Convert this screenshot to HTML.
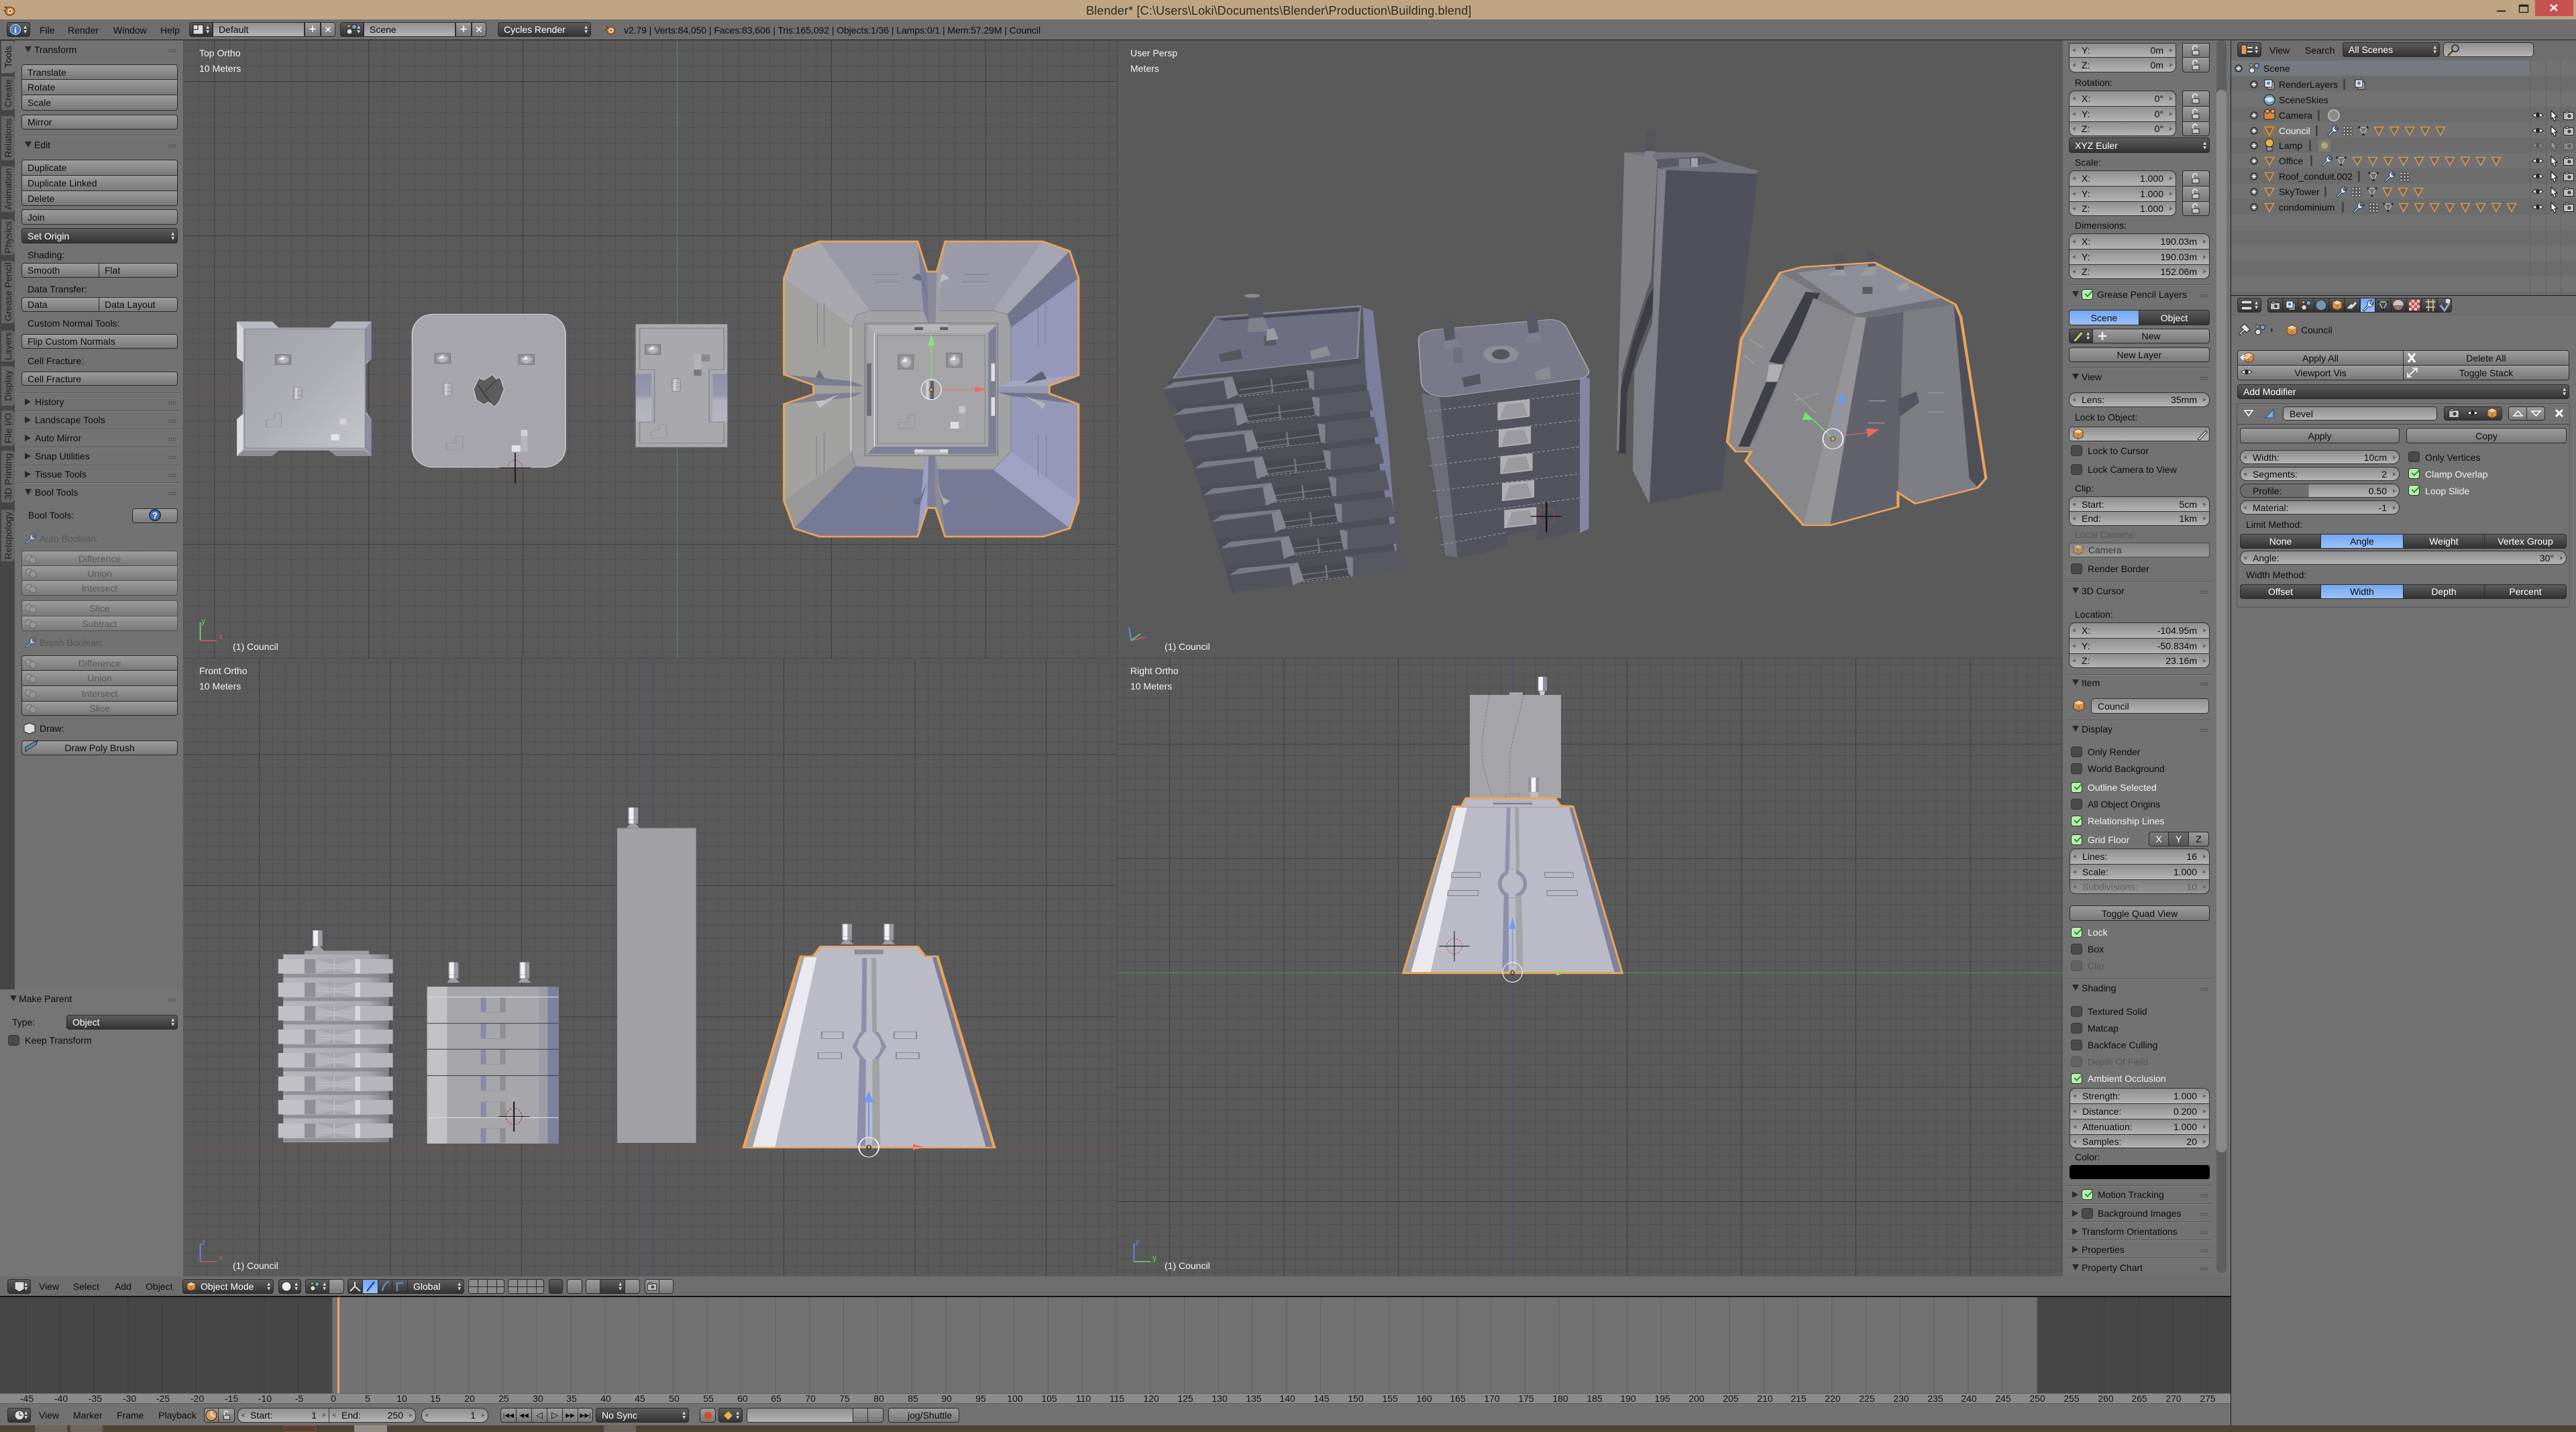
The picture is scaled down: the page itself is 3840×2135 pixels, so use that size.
<!DOCTYPE html>
<html><head><meta charset="utf-8"><title>Blender</title>
<style>
html,body{margin:0;padding:0;width:3840px;height:2135px;overflow:hidden;background:#727272}
body{position:relative;font:14px/16px "Liberation Sans",sans-serif;color:#0c0c0c}
.a{position:absolute;white-space:nowrap}
.p{position:absolute}
.b,.n,.m,.act,.f{position:absolute;box-sizing:border-box;display:flex;align-items:center;white-space:nowrap;border:1px solid #2c2c2c;border-radius:4px;overflow:hidden}
.b{background:linear-gradient(#9c9c9c,#797979);justify-content:center}
.l{justify-content:flex-start;padding-left:8px}
.n{background:linear-gradient(#8e8e8e,#b4b4b4);justify-content:space-between;padding:0 18px;border-color:#333}
.f{background:linear-gradient(#8e8e8e,#b4b4b4);padding-left:12px;border-color:#333}
.n:before,.n:after{content:"";position:absolute;top:50%;margin-top:-3px;border:3px solid transparent}
.n:before{left:4px;border-right:5px solid #686868;border-left:0}
.n:after{right:4px;border-left:5px solid #686868;border-right:0}
.m{background:linear-gradient(#5c5c5c,#333);color:#fff;padding-left:8px}
.m:after{content:"\25B2\A\25BC";white-space:pre;position:absolute;right:4px;top:50%;margin-top:-7px;font:6px/7px "DejaVu Sans",sans-serif;color:#ddd}
.mc{justify-content:center;padding-left:0}
.mc:after{display:none}
.act{background:linear-gradient(#74a6ef,#9ac2fb);justify-content:center}
.rt{border-radius:9px 9px 0 0}.rb{border-radius:0 0 9px 9px}.r0{border-radius:0}.ra{border-radius:10px}
.d{opacity:.5}
.w{color:#f2f2f2}
.g{color:#555}
.v{position:absolute;left:2px;width:20px;box-sizing:border-box;background:#656565;border-radius:5px 0 0 5px;writing-mode:vertical-rl;transform:rotate(180deg);text-align:center;line-height:20px;font-size:14px;color:#222}
.td{position:absolute;width:0;height:0;border-left:5px solid transparent;border-right:5px solid transparent;border-top:9px solid #2a2a2a}
.tr{position:absolute;width:0;height:0;border-top:5px solid transparent;border-bottom:5px solid transparent;border-left:9px solid #2a2a2a}
.gd{position:absolute;width:11px;height:5px;background-image:radial-gradient(#4c4c4c 1px,transparent 1px);background-size:3px 3px}
.c{position:absolute;width:17px;height:16px;box-sizing:border-box;border:1px solid #333;border-radius:4px;background:#4a4a4a}
.on{background:#b4f0a8}
.on:after{content:"";position:absolute;left:4px;top:2px;width:9px;height:4px;border-left:2px solid #2c8a42;border-bottom:2px solid #2c8a42;transform:rotate(-45deg)}
.s{position:absolute;height:1px;background:#5a5a5a;border-bottom:1px solid #808080}
</style></head>
<body>

<!-- ============ VIEWPORTS ============ -->
<svg class="p" style="left:0;top:0" width="3840" height="2135" viewBox="0 0 3840 2135" font-family="Liberation Sans">
<defs>
<pattern id="gm1" patternUnits="userSpaceOnUse" x="1009" y="581" width="23" height="23"><path d="M.5 0V23M0 .5H23" stroke="#505050" fill="none"/></pattern>
<pattern id="gM1" patternUnits="userSpaceOnUse" x="1009" y="581" width="230" height="230"><path d="M.5 0V230M0 .5H230" stroke="#3d3d3d" fill="none"/></pattern>
<pattern id="gm2" patternUnits="userSpaceOnUse" x="972.5" y="1711" width="19.55" height="19.55"><path d="M.5 0V19.55M0 .5H19.55" stroke="#505050" fill="none"/></pattern>
<pattern id="gM2" patternUnits="userSpaceOnUse" x="972.5" y="1711" width="195.5" height="195.5"><path d="M.5 0V195.5M0 .5H195.5" stroke="#3d3d3d" fill="none"/></pattern>
<pattern id="gm3" patternUnits="userSpaceOnUse" x="2254.5" y="1450" width="17.05" height="17.05"><path d="M.5 0V17.05M0 .5H17.05" stroke="#505050" fill="none"/></pattern>
<pattern id="gM3" patternUnits="userSpaceOnUse" x="2254.5" y="1450" width="170.5" height="170.5"><path d="M.5 0V170.5M0 .5H170.5" stroke="#3d3d3d" fill="none"/></pattern>
<pattern id="tl" patternUnits="userSpaceOnUse" x="495" y="0" width="50.8" height="50"><path d="M.5 0V50" stroke="#000" stroke-opacity=".16" fill="none"/></pattern>
<linearGradient id="gr1" x1="0" y1="0" x2="1" y2="1"><stop offset="0" stop-color="#a2a3a9"/><stop offset=".5" stop-color="#adaeb3"/><stop offset="1" stop-color="#c4c5cc"/></linearGradient>
<linearGradient id="gr3" x1="0" y1="0" x2="0" y2="1"><stop offset="0" stop-color="#8d90a8"/><stop offset=".45" stop-color="#9698ad"/><stop offset=".55" stop-color="#b0b1bb"/><stop offset="1" stop-color="#b4b5c2"/></linearGradient>
<linearGradient id="gr5" x1="0" y1="0" x2="1" y2="0"><stop offset="0" stop-color="#b6b6bb"/><stop offset=".8" stop-color="#a8a8ae"/><stop offset="1" stop-color="#7e7f88"/></linearGradient>
<symbol id="dome" viewBox="0 0 24 24"><path d="M1 1H23V23H1Z" fill="#8f8f93" stroke="#777"/><ellipse cx="12" cy="12" rx="8" ry="9" fill="#a9a9ad"/><path d="M12 4L19 12L12 20L5 12Z" fill="#b9b9bd"/><path d="M12 5L6 12H14Z" fill="#eee"/></symbol>
<symbol id="pipeT" viewBox="0 0 13 28"><rect x=".5" y=".5" width="12" height="27" rx="3" fill="#b4b4b8" stroke="#85858a"/><path d="M0 9H13M0 18H13" stroke="#8a8a8f"/><rect x="3" y="1" width="3" height="26" fill="#d2d2d6"/></symbol>
<g id="bf">
<polygon points="57,680 270,680 270,778 57,778" fill="url(#gr5)"/>
<rect x="122" y="698" width="82" height="62" fill="#a5a5aa"/>
<polygon points="122,700 162,722 202,700 202,760 162,742 122,760" fill="#b2b2b7"/>
<path d="M125 725H198M125 738H198M160 700V760" stroke="#c8c8cc" stroke-width="1.5" fill="none"/>
<rect x="47" y="700" width="63" height="60" fill="#c0c0c5"/><rect x="100" y="700" width="22" height="60" fill="#8e8e94"/>
<rect x="210" y="700" width="68" height="60" fill="#b5b5ba"/><rect x="202" y="700" width="10" height="60" fill="#d8d8dc"/>
<rect x="57" y="762" width="213" height="14" fill="#808086" opacity=".7"/>
</g>
<g id="pl"><polygon points="42,848 60,826 165,808 150,822" fill="#7a7a88"/><polygon points="42,848 150,822 156,880 52,902" fill="#53535d"/><polygon points="150,822 165,808 176,865 156,880" fill="#84848f"/></g>
<g id="pr"><polygon points="298,788 400,768 408,830 312,852" fill="#585863"/><polygon points="298,788 312,792 312,852 304,845" fill="#80808c"/></g>
<g id="pm"><polygon points="168,826 300,800 308,846 176,876" fill="#494951"/><path d="M178 850L300 822M175 868L240 852M235 815L238 860" stroke="#77777f" stroke-width="3" fill="none"/><path d="M178 872L305 846" stroke="#9a9aa2" stroke-width="2" stroke-dasharray="5 3"/></g>
<g id="win"><polygon points="642,890 700,880 700,935 642,947" fill="#b0b0b4"/><polygon points="656,896 688,890 696,932 646,942" fill="#9a9a9f"/></g>
<g id="pipeF"><rect x="0" y="0" width="20" height="67" fill="#9a9aa6"/><rect x="2" y="0" width="9" height="67" fill="#f0f0f2"/><path d="M0 52H20" stroke="#777"/><path d="M4 68L-3 85H23L15 68Z" fill="#9f9fa5"/></g>
</defs>

<!-- top-left -->
<rect x="273" y="60" width="1392" height="921" fill="#5a5a5a"/>
<rect x="273" y="60" width="1392" height="921" fill="url(#gm1)"/>
<rect x="273" y="60" width="1392" height="921" fill="url(#gM1)"/>
<path d="M273 581.5H1665" stroke="#7d4a4a"/><path d="M1009.5 60V981" stroke="#5f8a5f"/>
<!-- top-right -->
<rect x="1665" y="60" width="1410" height="921" fill="#5a5a5a"/>
<!-- bottom-left -->
<rect x="273" y="981" width="1392" height="922" fill="#5a5a5a"/>
<rect x="273" y="981" width="1392" height="922" fill="url(#gm2)"/>
<rect x="273" y="981" width="1392" height="922" fill="url(#gM2)"/>
<path d="M273 1711.5H1665" stroke="#7d4a4a"/><path d="M972.5 981V1903" stroke="#4f5f85"/>
<!-- bottom-right -->
<rect x="1665" y="981" width="1410" height="922" fill="#5a5a5a"/>
<rect x="1665" y="981" width="1410" height="922" fill="url(#gm3)"/>
<rect x="1665" y="981" width="1410" height="922" fill="url(#gM3)"/>
<path d="M1665 1450.5H3075" stroke="#5f8a5f"/><path d="M2254.5 981V1903" stroke="#4f5f85"/>
<path d="M1665.5 60V1903M273 981.5H3075" stroke="#484848"/>

<!-- TOP VIEW small buildings -->
<g transform="translate(320 440) scale(.5102 .33333)">
<polygon points="65,118 168,118 187,145 335,145 355,118 458,118 458,285 442,310 442,520 458,555 458,720 355,720 335,695 187,695 168,720 65,720 65,555 82,530 82,300 65,280" fill="#a8a8b0"/>
<polygon points="65,118 85,150 85,300 65,280" fill="#d8d8dc"/><polygon points="65,555 85,530 85,685 65,720" fill="#dcdce0"/>
<polygon points="65,118 168,118 187,148 85,150" fill="#b8b8c4"/><polygon points="355,118 458,118 440,150 335,148" fill="#b4b4c0"/>
<polygon points="458,118 440,150 440,300 458,285" fill="#8c8ea2"/><polygon points="458,555 440,530 440,685 458,720" fill="#8c8ea2"/>
<polygon points="65,720 85,695 187,695 168,720" fill="#8e8e92"/><polygon points="355,720 335,695 440,695 458,720" fill="#8e8e92"/>
<rect x="86" y="152" width="354" height="532" fill="url(#gr1)" stroke="#88888e" stroke-width="3"/>
<use href="#dome" x="175" y="250" width="50" height="76"/>
<use href="#pipeT" x="229" y="396" width="27" height="86"/>
<path d="M150 590V560L175 550V530L195 530V590Z" fill="none" stroke="#8e8e94" stroke-width="2"/>
<polygon points="365,550 385,550 385,650 340,650 340,622 365,622" fill="#bbbbc0"/><rect x="340" y="622" width="24" height="28" fill="#e4e4e8"/><rect x="365" y="552" width="20" height="28" fill="#d0d0d6"/>

<rect x="577" y="85" width="448" height="685" rx="60" ry="90" fill="#a5a5ab" stroke="#cfcfd4" stroke-width="3"/>
<use href="#dome" x="641" y="245" width="50" height="76"/><use href="#dome" x="886" y="250" width="50" height="76"/>
<use href="#pipeT" x="667" y="380" width="27" height="84"/>
<path d="M772 370L787 380L812 355L822 375L834 367L846 420L832 475L818 500L800 478L786 490L764 468L756 420Z" fill="#5c5c5c" stroke="#c4c4c8" stroke-width="3"/>
<path d="M768 400L805 478M822 382L790 430" stroke="#111" stroke-width="1.5" fill="none"/>
<path d="M677 690V665L705 660V632L725 632V690Z" fill="none" stroke="#8e8e94" stroke-width="2"/>
<polygon points="895,602 914,602 914,700 868,700 868,672 895,672" fill="#b5b5ba"/><rect x="868" y="672" width="25" height="28" fill="#e4e4e8"/><rect x="895" y="603" width="19" height="28" fill="#d0d0d6"/>
<ellipse cx="878" cy="775" rx="22" ry="36" fill="none" stroke="#b03a3a" stroke-width="2" stroke-dasharray="6 4"/><path d="M878 705V842M833 772H923" stroke="#0a0a0a" stroke-width="3"/>

<rect x="1230" y="130" width="268" height="550" fill="#a9a9ad"/>
<path d="M1242 148V333H1285V568H1242V662H1488V568H1445V333H1488V148Z" fill="none" stroke="#85858a" stroke-width="3"/>
<rect x="1231" y="353" width="45" height="212" fill="url(#gr3)"/><rect x="1455" y="353" width="43" height="212" fill="url(#gr3)"/>
<use href="#dome" x="1255" y="205" width="50" height="76"/><use href="#pipeT" x="1335" y="358" width="27" height="88"/>
<polygon points="1400,265 1425,265 1425,298 1447,298 1447,265 1422,265 1422,358 1400,358" fill="#b4b4b8"/><rect x="1422" y="265" width="25" height="32" fill="#88888d"/><rect x="1400" y="333" width="22" height="27" fill="#77777c"/>
<path d="M1275 640V610L1300 600V578L1320 578V640Z" fill="none" stroke="#8e8e94" stroke-width="2"/>
</g>

<!-- TOP VIEW Council -->
<g transform="translate(1100 320) scale(.35714 .33333)">
<polygon points="340,120 750,120 790,255 830,255 865,120 1272,120 1385,163 1422,285 1422,718 1300,765 1300,800 1422,848 1422,1285 1385,1403 1275,1440 865,1440 825,1312 790,1312 750,1440 340,1440 235,1403 192,1280 192,848 315,803 315,762 192,715 192,285 235,160" fill="#9e9ea4"/>
<polygon points="340,120 750,120 790,430 550,430" fill="#9a9aa6"/>
<polygon points="235,160 340,120 550,430 480,500 192,285" fill="#a8a8ae"/>
<polygon points="192,285 475,500 475,745 192,715" fill="#a1a19f"/>
<polygon points="192,848 475,818 475,1065 192,1280" fill="#a2a2a0"/>
<polygon points="192,1280 475,1065 490,1125 235,1403" fill="#989898"/>
<polygon points="235,1403 490,1125 775,1140 750,1440 340,1440" fill="#757a96"/>
<polygon points="865,120 1272,120 1065,430 840,430" fill="#9a9aa8"/>
<polygon points="1272,120 1385,163 1125,445 1065,430" fill="#a4a4b2"/>
<polygon points="1385,163 1422,285 1140,505 1125,445" fill="#73758e"/>
<polygon points="1422,285 1140,505 1140,745 1422,718" fill="#9698ba"/>
<polygon points="1422,848 1140,812 1140,1060 1422,1285" fill="#9698ba"/>
<polygon points="1422,1285 1385,1403 1065,1140 1140,1060" fill="#9fa2c2"/>
<polygon points="1385,1403 1275,1440 865,1440 830,1140 1065,1140" fill="#767a97"/>
<polygon points="790,255 830,255 825,490 795,490" fill="#8a8a98"/><polygon points="750,120 790,255 795,490 775,430" fill="#7a7d9c"/><polygon points="865,120 830,255 825,490 840,430" fill="#a0a0a2"/>
<polygon points="315,762 315,803 535,795 535,768" fill="#a0a09e"/><polygon points="192,715 315,762 535,768 475,745" fill="#7a7c90"/><polygon points="192,848 315,803 535,795 475,818" fill="#808092"/>
<polygon points="1300,765 1300,800 1080,795 1080,770" fill="#9698b0"/><polygon points="1422,718 1300,765 1080,770 1140,745" fill="#a4a6c2"/><polygon points="1422,848 1300,800 1080,795 1140,812" fill="#72748e"/>
<polygon points="790,1312 825,1312 822,1075 795,1075" fill="#7b7f9c"/><polygon points="750,1440 790,1312 795,1075 775,1140" fill="#9ca0c8"/><polygon points="865,1440 825,1312 822,1075 835,1140" fill="#8a8a90"/>
<polygon points="550,430 775,430 795,490 530,485 480,505 495,450" fill="#a2a2a4"/><polygon points="840,430 1065,430 1125,445 1140,505 1085,485 822,490" fill="#a2a2a4"/>
<polygon points="475,505 530,485 530,770 475,745" fill="#a2a2a2"/><polygon points="475,818 530,790 530,1078 475,1065" fill="#a2a2a2"/>
<polygon points="1140,505 1085,485 1085,765 1140,745" fill="#a2a2a4"/><polygon points="1140,812 1085,795 1085,1078 1140,1060" fill="#a2a2a4"/>
<polygon points="490,1125 530,1078 780,1078 775,1140" fill="#a2a2a2"/><polygon points="835,1140 835,1078 1085,1078 1140,1060 1065,1140" fill="#a2a2a4"/>
<path d="M475 505L495 450L550 430H775M840 430H1065L1125 445L1140 505V745M1140 812V1060L1065 1140H830M775 1140H550L490 1125L475 1065" fill="none" stroke="#7d7d82" stroke-width="2.5"/>
<rect x="530" y="485" width="555" height="593" fill="#9d9da1" stroke="#76767a" stroke-width="3"/>
<polygon points="540,495 1078,495 1045,528 570,528" fill="#b0b0b3"/><polygon points="1078,495 1078,1070 1045,1038 1045,528" fill="#7d7f96"/><polygon points="540,1070 1078,1070 1045,1038 570,1038" fill="#7d7f96"/><polygon points="540,495 570,528 570,1038 540,1070" fill="#a6a6a9"/>
<rect x="570" y="528" width="475" height="510" fill="#a5a5a8"/><rect x="583" y="541" width="449" height="482" fill="#a5a5a8" stroke="#7d7d82" stroke-width="2.5"/>
<rect x="737" y="490" width="140" height="26" fill="#b6b6ba"/><rect x="737" y="503" width="36" height="13" fill="#5d5d68"/><rect x="843" y="503" width="34" height="13" fill="#5d5d68"/>
<rect x="737" y="1050" width="140" height="22" fill="#babac0"/><rect x="737" y="1050" width="36" height="13" fill="#dcdce0"/><rect x="843" y="1050" width="34" height="13" fill="#dcdce0"/>
<rect x="538" y="665" width="19" height="235" fill="#6e6e78"/><rect x="1057" y="665" width="16" height="235" fill="#dcdce0"/><rect x="1057" y="745" width="16" height="72" fill="#7e7e86"/>
<path d="M471 505V1055M570 528V1038" stroke="#fff" stroke-width="2.5"/>
<use href="#dome" x="666" y="622" width="70" height="74"/><use href="#dome" x="868" y="614" width="70" height="74"/>
<path d="M672 928H710V896H738V957H672Z" fill="none" stroke="#8e8e94" stroke-width="2"/>
<polygon points="922,857 950,857 950,957 887,957 887,927 922,927" fill="#a9a9ad"/><rect x="887" y="927" width="35" height="30" fill="#dedee2"/><rect x="922" y="857" width="28" height="30" fill="#c4c4cc"/>
<path d="M563 268H672M572 300H680M940 268H1050M935 300H1040M575 1264H678M560 1295H672M935 1264H1042M943 1295H1055M332 395V578M360 395V590M1253 415V585M1285 395V575M328 990V1170M360 975V1145M1253 980V1175M1287 990V1170" stroke="#7f7f86" stroke-width="3" fill="none"/>
<polygon points="725,285 745,265 760,265 790,365 775,300" fill="#6a6c80"/><polygon points="885,285 860,265 850,270 825,370 845,300" fill="#bcbcc0"/>
<polygon points="325,728 340,695 360,730 420,745" fill="#6c6e84"/><polygon points="325,835 360,830 420,805 340,865" fill="#c0c0c4"/>
<polygon points="1290,735 1270,700 1255,710 1195,755" fill="#60627a"/><polygon points="1285,845 1270,870 1255,850 1195,810" fill="#b4b4ba"/>
<polygon points="760,1265 735,1270 735,1295 760,1295 790,1200" fill="#6a6c80"/><polygon points="855,1265 885,1280 860,1300 830,1200" fill="#b0b0b2"/>
<rect x="785" y="745" width="42" height="80" fill="#a2a2a6"/><rect x="803" y="745" width="15" height="80" fill="#5e5e64"/><rect x="785" y="745" width="12" height="80" fill="#d0d0d2"/>
<path d="M807 735V560" stroke="#7ee87a" stroke-width="3"/><polygon points="807,532 795,585 821,585" fill="#7ee87a"/>
<path d="M850 783H1000" stroke="#ec6a5e" stroke-width="3"/><polygon points="1038,782 990,770 990,795" fill="#ec6a5e"/>
<ellipse cx="807" cy="782" rx="42" ry="45" fill="none" stroke="#fff" stroke-width="3"/><ellipse cx="807" cy="782" rx="8" ry="8" stroke="#111" stroke-width="2" style="fill:#e69a50"/>
<polygon points="340,120 750,120 790,255 830,255 865,120 1272,120 1385,163 1422,285 1422,718 1300,765 1300,800 1422,848 1422,1285 1385,1403 1275,1440 865,1440 825,1312 790,1312 750,1440 340,1440 235,1403 192,1280 192,848 315,803 315,762 192,715 192,285 235,160" fill="none" stroke="#eba35a" stroke-width="8.5"/>
</g>

<!-- PERSPECTIVE -->
<g transform="translate(1700 180) scale(.8292 .4719)">
<!-- B1 -->
<polygon points="400,590 418,600 445,1000 462,1385 445,1400 430,1200 405,800" fill="#7c7e9e"/>
<polygon points="48,820 395,750 460,1385 165,1492 150,1400" fill="#4f4f59"/>
<polygon points="135,620 395,585 392,750 60,812" fill="#6e6e82"/><path d="M135 620L395 585L390 750L60 812Z" fill="none" stroke="#8b8ba0" stroke-width="3"/><polygon points="138,625 395,590 393,602 150,632" fill="#4a4a56"/>
<polygon points="187,555 215,550 222,620 195,625" fill="#585862"/><ellipse cx="201" cy="553" rx="14" ry="6" fill="#8a8a96"/><polygon points="195,625 222,620 232,665 192,668" fill="#80808c"/>
<rect x="222" y="680" width="22" height="30" fill="#5a5a62"/><polygon points="228,660 240,655 248,690 226,695" fill="#9a9aa2"/>
<polygon points="140,738 180,722 184,752 145,762" fill="#56565f"/><polygon points="305,728 335,712 342,740 308,755" fill="#8d8d95"/>
<use href="#pm"/><use href="#pl"/><use href="#pr"/>
<g transform="translate(14 84)"><use href="#pm"/></g><g transform="translate(18 84)"><use href="#pl"/></g><g transform="translate(10 84)"><use href="#pr"/></g>
<g transform="translate(28 168)"><use href="#pm"/></g><g transform="translate(36 168)"><use href="#pl"/></g><g transform="translate(20 168)"><use href="#pr"/></g>
<g transform="translate(42 252)"><use href="#pm"/></g><g transform="translate(54 252)"><use href="#pl"/></g><g transform="translate(30 252)"><use href="#pr"/></g>
<g transform="translate(56 336)"><use href="#pm"/></g><g transform="translate(70 336)"><use href="#pl"/></g><g transform="translate(40 336)"><use href="#pr"/></g>
<g transform="translate(70 420)"><use href="#pm"/></g><g transform="translate(86 420)"><use href="#pl"/></g><g transform="translate(50 420)"><use href="#pr"/></g>
<g transform="translate(84 504)"><use href="#pm"/></g><g transform="translate(102 504)"><use href="#pl"/></g><g transform="translate(60 504)"><use href="#pr"/></g>
<g transform="translate(98 588)"><use href="#pm"/></g><g transform="translate(118 588)"><use href="#pl"/></g><g transform="translate(70 588)"><use href="#pr"/></g>
<!-- B2 -->
<polygon points="505,860 795,800 808,815 806,1290 565,1385 545,1378" fill="#53535e"/>
<polygon points="505,860 538,875 570,1380 548,1375" fill="#6d6d78"/>
<polygon points="790,800 808,815 806,1290 790,1302" fill="#8486a6"/>
<path d="M500 690Q500 668 530 660L735 628Q755 628 765 650L805 785Q812 810 780 818L560 870Q515 880 505 830Z" fill="#797989" stroke="#a8a8b4" stroke-width="2"/>
<use href="#win"/><g transform="translate(2 85)"><use href="#win"/></g><g transform="translate(5 170)"><use href="#win"/></g><g transform="translate(8 255)"><use href="#win"/></g><g transform="translate(12 340)"><use href="#win"/></g>
<path d="M510 920L790 860M515 1005L790 945M520 1090L790 1030M525 1170L792 1115M530 1255L795 1190M540 1340L660 1300" stroke="#a5a5ad" stroke-width="2" stroke-dasharray="5 4" fill="none"/>
<polygon points="660,1310 712,1290 712,1330 696,1340 660,1350" fill="#5a5a5a"/>
<polygon points="542,625 562,622 566,690 548,695" fill="#585862"/><polygon points="548,695 566,690 578,722 545,722" fill="#80808c"/>
<polygon points="693,605 712,600 716,668 698,672" fill="#585862"/><polygon points="698,672 716,668 724,700 692,700" fill="#80808c"/>
<rect x="562" y="715" width="17" height="50" fill="#70707a"/>
<ellipse cx="648" cy="738" rx="32" ry="28" fill="#8d8d98"/><ellipse cx="648" cy="738" rx="16" ry="16" fill="#55555e"/>
<polygon points="578,812 610,800 612,830 582,842" fill="#55555f"/><polygon points="708,795 735,775 738,815 712,820" fill="#8a8a92"/>
<!-- tower -->
<polygon points="870,100 930,120 918,500 890,650 865,800 866,1052 856,1040" fill="#7f7f84"/>
<polygon points="925,520 922,600 895,720 875,860 872,1052 860,1050 864,840 885,700 912,560" fill="#3d3d46"/>
<polygon points="930,150 945,155 915,1210 885,1105 888,790 920,640" fill="#80808a"/>
<polygon points="945,155 1110,165 1045,1165 915,1210" fill="#50505b"/>
<polygon points="870,100 1012,100 1048,128 1110,158 1108,168 940,155 930,120" fill="#74747f"/>
<polygon points="925,122 1012,112 1040,132 1000,140 940,148" fill="#5a5a64"/>
<rect x="908" y="30" width="18" height="66" fill="#55555f"/><polygon points="908,96 926,96 918,122 902,122" fill="#80808a"/>
<rect x="968" y="120" width="20" height="30" fill="#7e7e88"/><rect x="990" y="118" width="12" height="28" fill="#a0a0a8"/>
<!-- council -->
<polygon points="1150,480 1190,462 1320,448 1465,580 1475,620 1520,1130 1505,1160 1393,1210 1362,1175 1362,1220 1240,1278 1192,1278 1088,1075 1098,1045 1070,1045 1055,1015 1080,690" fill="#77777c"/>
<polygon points="1150,480 1215,545 1130,800 1098,1040 1070,1040 1056,1015 1080,690" fill="#8b8b8f"/>
<polygon points="1196,540 1222,545 1155,770 1130,762" fill="#3f3f48"/><polygon points="1130,770 1155,770 1145,825 1125,825" fill="#b0b0b0"/><polygon points="1125,825 1145,825 1095,1030 1075,1030" fill="#3f3f48"/>
<polygon points="1210,560 1285,620 1240,1278 1192,1278 1088,1075" fill="#87878c"/>
<polygon points="1285,620 1305,622 1240,1275 1192,1275" fill="#959597"/>
<polygon points="1305,622 1372,605 1362,1220 1240,1278" fill="#62626d"/>
<polygon points="1372,600 1462,578 1505,1158 1393,1208 1362,1175" fill="#7d7d84"/>
<polygon points="1462,580 1472,620 1518,1130 1505,1158 1490,1130" fill="#4f4f59"/>
<polygon points="1362,880 1395,855 1400,890 1365,935" fill="#55555f"/>
<polygon points="1180,480 1320,450 1440,560 1285,610" fill="#8e8e98"/><polygon points="1285,610 1440,560 1465,580 1300,620" fill="#70707a"/>
<polygon points="1245,420 1262,416 1265,470 1250,472" fill="#55555f"/><polygon points="1305,410 1320,407 1322,460 1308,462" fill="#55555f"/>
<polygon points="1238,490 1268,488 1265,470 1250,472" fill="#9a9aa0"/><polygon points="1295,490 1322,485 1322,460 1305,462" fill="#9a9aa0"/>
<rect x="1298" y="525" width="18" height="22" fill="#5a5a62"/><polygon points="1358,525 1378,510 1384,530 1365,540" fill="#9c9ca2"/>
<path d="M1175 885L1220 860M1310 885H1340M1308 955H1338M1415 860H1445M1415 920H1445M1095 690L1120 720M1085 740L1105 770M1175 860L1215 925" stroke="#a0a0a4" stroke-width="2.5" fill="none"/>
<path d="M1245 1005L1210 945" stroke="#6ee86a" stroke-width="2"/><polygon points="1195,920 1210,945 1190,945" fill="#6ee86a"/>
<path d="M1260 995L1310 985" stroke="#ee6b5e" stroke-width="2"/><polygon points="1328,975 1305,972 1308,1000" fill="#ee6b5e"/>
<path d="M1247 1000L1260 890" stroke="#6a9cf0" stroke-width="2"/><polygon points="1262,855 1252,890 1268,892" fill="#6a9cf0"/>
<ellipse cx="1245" cy="1005" rx="18" ry="32" fill="none" stroke="#fff" stroke-width="2"/><ellipse cx="1245" cy="1005" rx="4" ry="7" fill="#e69a50" stroke="#111"/>
<polygon points="1150,480 1190,462 1320,448 1465,580 1475,620 1520,1130 1505,1160 1393,1210 1362,1175 1362,1220 1240,1278 1192,1278 1088,1075 1098,1045 1070,1045 1055,1015 1080,690" fill="none" stroke="#eba35a" stroke-width="5"/>
<!-- cursor -->
<ellipse cx="730" cy="1250" rx="14" ry="26" fill="none" stroke="#c04040" stroke-width="2" stroke-dasharray="5 4"/><path d="M730 1205V1300M702 1250H757" stroke="#0a0a0a" stroke-width="2.5"/>
</g>

<!-- FRONT VIEW -->
<g transform="translate(380 1180) scale(.7398 .35714)">
<rect x="100" y="665" width="130" height="15" fill="#9e9ea2"/>
<use href="#bf"/><use href="#bf" y="98"/><use href="#bf" y="196"/><use href="#bf" y="294"/><use href="#bf" y="392"/><use href="#bf" y="490"/><use href="#bf" y="588"/><use href="#bf" y="686"/>
<g transform="translate(116 580)"><rect width="20" height="66" fill="#9a9aa6"/><rect x="2" width="9" height="66" fill="#f0f0f2"/><path d="M4 66L-6 98H28L15 66Z" fill="#9f9fa5"/></g>
<rect x="347" y="815" width="265" height="655" fill="#a7a7ab"/><rect x="347" y="815" width="40" height="655" fill="#c2c2c4"/><rect x="572" y="815" width="18" height="655" fill="#9c9ca4"/><rect x="590" y="815" width="22" height="655" fill="#7e80a0"/>
<g fill="#a7a7ab" stroke="#8e8e92" stroke-width="2">
<rect x="465" y="858" width="30" height="64"/><rect x="465" y="968" width="30" height="64"/><rect x="465" y="1076" width="30" height="64"/><rect x="465" y="1186" width="30" height="64"/><rect x="465" y="1296" width="30" height="64"/><rect x="465" y="1406" width="30" height="62"/></g>
<g fill="#888aab"><rect x="455" y="858" width="10" height="64"/><rect x="455" y="968" width="10" height="64"/><rect x="455" y="1076" width="10" height="64"/><rect x="455" y="1186" width="10" height="64"/><rect x="455" y="1296" width="10" height="64"/><rect x="455" y="1406" width="10" height="62"/></g>
<g fill="#8f8f8f"><rect x="495" y="858" width="10" height="64"/><rect x="495" y="968" width="10" height="64"/><rect x="495" y="1076" width="10" height="64"/><rect x="495" y="1186" width="10" height="64"/><rect x="495" y="1296" width="10" height="64"/><rect x="495" y="1406" width="10" height="62"/></g>
<path d="M347 858H612M347 1362H612" stroke="#d8d8dc" stroke-width="3"/><path d="M347 968H612M347 1076H612M347 1186H612" stroke="#4a4a4e" stroke-width="3"/>
<use href="#pipeF" x="390" y="713"/><use href="#pipeF" x="533" y="713"/>
<ellipse cx="522" cy="1357" rx="16" ry="34" fill="none" stroke="#b83a3a" stroke-width="2" stroke-dasharray="7 4"/><path d="M522 1295V1420M491 1357H553" stroke="#0a0a0a" stroke-width="2.5"/>
<rect x="730" y="153" width="159" height="1314" fill="#a1a1a5"/>
<use href="#pipeF" x="752" y="67"/>
<polygon points="985,1487 1100,688 1125,688 1140,647 1335,647 1350,688 1375,688 1490,1487" fill="#bbbbc8"/>
<polygon points="985,1487 1100,690 1107,690 1003,1485" fill="#a2a2a2"/><polygon points="1003,1485 1107,692 1132,692 1048,1485" fill="#e9e9ef"/>
<polygon points="1365,692 1375,692 1490,1487 1473,1485" fill="#7a7c94"/>
<rect x="1208" y="660" width="58" height="20" fill="#8b8b96"/>
<polygon points="1224,695 1233,695 1232,1005 1222,1005" fill="#8c8eac"/><polygon points="1242,695 1252,695 1253,1005 1244,1005" fill="#a0a0a2"/>
<path d="M1224 1005L1208 1065L1224 1118M1252 1005L1268 1065L1252 1118" fill="none" stroke="#8f90a8" stroke-width="9"/><ellipse cx="1238" cy="1062" rx="23" ry="55" fill="#bbbbc8"/>
<polygon points="1218,1118 1231,1118 1230,1480 1213,1480" fill="#8c8eac"/><polygon points="1244,1118 1258,1118 1260,1480 1244,1480" fill="#a2a2a4"/>
<g fill="none" stroke="#77777f" stroke-width="2"><rect x="1142" y="1003" width="43" height="29"/><rect x="1288" y="1003" width="45" height="29"/><rect x="1135" y="1090" width="47" height="26"/><rect x="1292" y="1090" width="46" height="26"/></g>
<use href="#pipeF" x="1183" y="553"/><use href="#pipeF" x="1267" y="553"/>
<path d="M1237 1440V1290" stroke="#6a9cf0" stroke-width="3"/><polygon points="1237,1250 1228,1298 1246,1298" fill="#6a9cf0"/>
<path d="M1258 1485H1330" stroke="#ee6b5e" stroke-width="3"/><polygon points="1350,1485 1326,1472 1326,1498" fill="#ee6b5e"/>
<polygon points="985,1487 1100,688 1125,688 1140,647 1335,647 1350,688 1375,688 1490,1487" fill="none" stroke="#eba35a" stroke-width="6"/>
<ellipse cx="1237" cy="1485" rx="20" ry="41" fill="none" stroke="#fff" stroke-width="2.5"/><ellipse cx="1237" cy="1485" rx="4" ry="8" fill="none" stroke="#111" stroke-width="2"/>
</g>

<!-- RIGHT VIEW -->
<g transform="translate(2050 1000) scale(.33333)">
<rect x="423" y="108" width="408" height="462" fill="#a5a5a9"/><rect x="600" y="97" width="60" height="11" fill="#aaa"/>
<path d="M510 108C490 230 470 320 480 400C490 470 510 520 525 565M662 108C650 200 600 330 600 420C600 480 598 520 605 545" stroke="#55555a" stroke-width="2" stroke-dasharray="10 5" stroke-opacity=".7" fill="none"/>
<rect x="728" y="27" width="40" height="63" fill="#8f8f9f"/><rect x="730" y="27" width="20" height="63" fill="#f4f4f6"/><path d="M733 92H760L755 108H738Z" fill="#cfcfd4"/>
<rect x="685" y="478" width="47" height="64" fill="#8f8f9f"/><rect x="698" y="478" width="20" height="64" fill="#f4f4f6"/><path d="M692 544H730L726 568H696Z" fill="#bdbdc2"/>
<rect x="583" y="550" width="64" height="20" fill="#a2a2a6" stroke="#8d8d92" stroke-width="2"/>
<polygon points="125,1352 348,607 385,607 405,570 805,570 830,605 885,607 1105,1352" fill="#bbbbc7"/>
<polygon points="125,1352 348,607 362,612 160,1350" fill="#a0a0a2"/><polygon points="160,1350 362,612 410,612 248,1350" fill="#e9e9ef"/>
<polygon points="868,612 885,612 1100,1350 1070,1350" fill="#80829c"/>
<path d="M385 610H830" stroke="#8c8c92" stroke-width="2"/>
<rect x="527" y="578" width="176" height="18" fill="#b2b2ba"/><rect x="527" y="592" width="176" height="6" fill="#74748a"/>
<polygon points="588,612 605,612 600,895 580,895" fill="#9092ae"/><polygon points="625,612 642,612 646,890 630,895" fill="#a2a2a4"/>
<circle cx="614" cy="953" r="55" fill="none" stroke="#8f90a8" stroke-width="20"/><circle cx="614" cy="953" r="48" fill="#bbbbc7"/>
<rect x="595" y="890" width="35" height="30" fill="#bbbbc7"/><rect x="597" y="985" width="31" height="30" fill="#bbbbc7"/>
<polygon points="575,1010 597,1005 597,1345 568,1345" fill="#8c8fae"/><polygon points="628,1005 655,1010 662,1345 632,1345" fill="#a6a6a8"/>
<g fill="none" stroke="#6e6e78" stroke-width="2.5"><polygon points="343,902 470,902 470,925 340,925"/><polygon points="757,902 884,902 887,925 760,925"/><polygon points="326,983 462,983 460,1006 323,1006"/><polygon points="768,983 903,983 905,1006 770,1006"/></g>
<path d="M614 1320V1150" stroke="#6a9cf0" stroke-width="4"/><polygon points="614,1102 600,1155 628,1155" fill="#6a9cf0"/>
<path d="M660 1349H815" stroke="#7ee87a" stroke-width="4"/><polygon points="860,1349 810,1335 810,1363" fill="#7ee87a"/>
<circle cx="354" cy="1232" r="34" fill="none" stroke="#c03c3c" stroke-width="2.5" stroke-dasharray="9 5"/><path d="M354 1165V1300M286 1232H422" stroke="#0a0a0a" stroke-width="3"/>
<polygon points="125,1352 348,607 385,607 405,570 805,570 830,605 885,607 1105,1352" fill="none" stroke="#eba35a" stroke-width="9"/>
<circle cx="614" cy="1349" r="44" fill="none" stroke="#fff" stroke-width="3"/><circle cx="614" cy="1350" r="8" fill="none" stroke="#111" stroke-width="3"/>
</g>

<!-- Axis widgets -->
<g stroke-width="1.5" fill="none">
<path d="M298.5 928V955" stroke="#6fd36c" stroke-width="2"/><path d="M298 955H323" stroke="#d05c5c"/>
<path d="M298.5 1854V1881" stroke="#5c88e0" stroke-width="2"/><path d="M298 1881H323" stroke="#d05c5c"/>
<path d="M1690.5 1854V1881" stroke="#5c88e0" stroke-width="2"/><path d="M1690 1881H1715" stroke="#6fd36c"/>
<path d="M1686 955L1683 935" stroke="#5c88e0" stroke-width="2"/><path d="M1686 955L1708 950" stroke="#d05c5c"/><path d="M1686 955L1700 945" stroke="#6fd36c"/>
</g>
<g font-size="12"><text x="300" y="930" fill="#6fd36c">y</text><text x="326" y="953" fill="#d05c5c">x</text><text x="300" y="1856" fill="#5c88e0">z</text><text x="326" y="1879" fill="#d05c5c">x</text><text x="1692" y="1856" fill="#5c88e0">z</text><text x="1718" y="1879" fill="#6fd36c">y</text></g>
<g font-size="14" fill="#f4f4f4">
<text x="297" y="84">Top Ortho</text><text x="297" y="107">10 Meters</text><text x="347" y="969">(1) Council</text>
<text x="1685" y="84">User Persp</text><text x="1685" y="107">Meters</text><text x="1736" y="969">(1) Council</text>
<text x="297" y="1005">Front Ortho</text><text x="297" y="1028">10 Meters</text><text x="347" y="1892">(1) Council</text>
<text x="1685" y="1005">Right Ortho</text><text x="1685" y="1028">10 Meters</text><text x="1736" y="1892">(1) Council</text>
</g>

<!-- TIMELINE -->
<rect x="0" y="1933" width="3325" height="165" fill="#727272"/>
<rect x="0" y="1933" width="495" height="144" fill="#464646"/>
<rect x="3037" y="1933" width="288" height="144" fill="#464646"/>
<rect x="0" y="1933" width="3325" height="144" fill="url(#tl)"/>
<rect x="0" y="2077" width="3325" height="16" fill="#8b8b8b"/>
<path d="M0 2077.5H3325M0 2092.5H3325" stroke="#5f5f5f"/>
<rect x="503" y="1933" width="3" height="144" fill="#f2a564"/>
<g font-size="14" fill="#111" text-anchor="middle">
<text x="40" y="2090">-45</text><text x="91" y="2090">-40</text><text x="142" y="2090">-35</text><text x="193" y="2090">-30</text><text x="243" y="2090">-25</text><text x="294" y="2090">-20</text><text x="345" y="2090">-15</text><text x="395" y="2090">-10</text><text x="446" y="2090">-5</text><text x="497" y="2090">0</text><text x="548" y="2090">5</text><text x="599" y="2090">10</text><text x="649" y="2090">15</text><text x="700" y="2090">20</text><text x="751" y="2090">25</text><text x="802" y="2090">30</text><text x="852" y="2090">35</text><text x="903" y="2090">40</text><text x="954" y="2090">45</text><text x="1005" y="2090">50</text><text x="1056" y="2090">55</text><text x="1107" y="2090">60</text><text x="1157" y="2090">65</text><text x="1208" y="2090">70</text><text x="1259" y="2090">75</text><text x="1310" y="2090">80</text><text x="1361" y="2090">85</text><text x="1411" y="2090">90</text><text x="1462" y="2090">95</text><text x="1513" y="2090">100</text><text x="1564" y="2090">105</text><text x="1615" y="2090">110</text><text x="1665" y="2090">115</text><text x="1716" y="2090">120</text><text x="1767" y="2090">125</text><text x="1818" y="2090">130</text><text x="1869" y="2090">135</text><text x="1919" y="2090">140</text><text x="1970" y="2090">145</text><text x="2021" y="2090">150</text><text x="2072" y="2090">155</text><text x="2123" y="2090">160</text><text x="2173" y="2090">165</text><text x="2224" y="2090">170</text><text x="2275" y="2090">175</text><text x="2326" y="2090">180</text><text x="2377" y="2090">185</text><text x="2427" y="2090">190</text><text x="2478" y="2090">195</text><text x="2529" y="2090">200</text><text x="2580" y="2090">205</text><text x="2631" y="2090">210</text><text x="2681" y="2090">215</text><text x="2732" y="2090">220</text><text x="2783" y="2090">225</text><text x="2834" y="2090">230</text><text x="2885" y="2090">235</text><text x="2935" y="2090">240</text><text x="2986" y="2090">245</text><text x="3037" y="2090">250</text><text x="3088" y="2090">255</text><text x="3139" y="2090">260</text><text x="3189" y="2090">265</text><text x="3240" y="2090">270</text><text x="3291" y="2090">275</text>
</g>
</svg>

<!-- ============ TITLE BAR ============ -->
<div class="p" style="left:0;top:0;width:3840px;height:29px;background:#bfa583"></div>
<div class="a" style="left:1619px;top:6px;font-size:18px;line-height:20px;color:#2a2a2a;letter-spacing:.15px">Blender* [C:\Users\Loki\Documents\Blender\Production\Building.blend]</div>
<div class="p" style="left:3779px;top:0;width:57px;height:24px;background:#c75050"></div>
<div class="p" style="left:0;top:29px;width:3840px;height:30px;background:#6e6e6e;border-bottom:1px solid #1c1c1c"></div>

<!-- top header -->
<div class="a" style="left:59px;top:37px">File</div><div class="a" style="left:101px;top:37px">Render</div><div class="a" style="left:169px;top:37px">Window</div><div class="a" style="left:239px;top:37px">Help</div>
<div class="m" style="left:10px;top:33px;width:35px;height:22px"></div>
<div class="m" style="left:282px;top:33px;width:35px;height:22px;border-radius:4px 0 0 4px"></div>
<div class="f" style="left:317px;top:33px;width:137px;height:22px;border-radius:0;padding-left:8px">Default</div>
<div class="b" style="left:454px;top:33px;width:24px;height:22px;border-radius:0;color:#fff;font-size:20px">+</div>
<div class="b" style="left:478px;top:33px;width:22px;height:22px;border-radius:0 4px 4px 0;color:#fff">✕</div>
<div class="m" style="left:507px;top:33px;width:35px;height:22px;border-radius:4px 0 0 4px"></div>
<div class="f" style="left:542px;top:33px;width:137px;height:22px;border-radius:0;padding-left:8px">Scene</div>
<div class="b" style="left:679px;top:33px;width:24px;height:22px;border-radius:0;color:#fff;font-size:20px">+</div>
<div class="b" style="left:703px;top:33px;width:22px;height:22px;border-radius:0 4px 4px 0;color:#fff">✕</div>
<div class="m" style="left:742px;top:33px;width:139px;height:22px">Cycles Render</div>
<div class="a" style="left:930px;top:37px;letter-spacing:-.06px">v2.79 | Verts:84,050 | Faces:83,606 | Tris:165,092 | Objects:1/36 | Lamps:0/1 | Mem:57.29M | Council</div>

<!-- ============ LEFT TOOL SHELF ============ -->
<div class="p" style="left:0;top:60px;width:22px;height:1415px;background:#464646"></div>
<div class="p" style="left:22px;top:60px;width:251px;height:1415px;background:#727272"></div>
<div class="p" style="left:0;top:1475px;width:273px;height:428px;background:#757575"></div>
<div class="v" style="top:61px;height:48px;background:#727272;color:#111">Tools</div>
<div class="v" style="top:114px;height:50px">Create</div>
<div class="v" style="top:173px;height:66px">Relations</div>
<div class="v" style="top:248px;height:68px">Animation</div>
<div class="v" style="top:327px;height:53px">Physics</div>
<div class="v" style="top:389px;height:93px">Grease Pencil</div>
<div class="v" style="top:493px;height:46px">Layers</div>
<div class="v" style="top:546px;height:59px">Display</div>
<div class="v" style="top:612px;height:53px">File I/O</div>
<div class="v" style="top:672px;height:77px">3D Printing</div>
<div class="v" style="top:760px;height:77px">Retopology</div>

<i class="td" style="left:37px;top:69px"></i><div class="a" style="left:51px;top:66px">Transform</div><i class="gd" style="left:251px;top:73px"></i>
<div class="b l r0 rt" style="left:32px;top:96px;width:233px;height:23px;border-radius:4px 4px 0 0">Translate</div>
<div class="b l r0" style="left:32px;top:118px;width:233px;height:24px">Rotate</div>
<div class="b l" style="left:32px;top:141px;width:233px;height:24px;border-radius:0 0 4px 4px">Scale</div>
<div class="b l" style="left:32px;top:171px;width:233px;height:22px">Mirror</div>
<div class="s" style="left:27px;top:201px;width:242px"></div>
<i class="td" style="left:37px;top:211px"></i><div class="a" style="left:51px;top:208px">Edit</div><i class="gd" style="left:251px;top:215px"></i>
<div class="b l" style="left:32px;top:238px;width:233px;height:24px;border-radius:4px 4px 0 0">Duplicate</div>
<div class="b l r0" style="left:32px;top:261px;width:233px;height:24px">Duplicate Linked</div>
<div class="b l" style="left:32px;top:284px;width:233px;height:23px;border-radius:0 0 4px 4px">Delete</div>
<div class="b l" style="left:32px;top:312px;width:233px;height:23px">Join</div>
<div class="m" style="left:32px;top:340px;width:233px;height:23px">Set Origin</div>
<div class="a" style="left:41px;top:372px">Shading:</div>
<div class="b l" style="left:32px;top:392px;width:116px;height:22px;border-radius:4px 0 0 4px">Smooth</div>
<div class="b l" style="left:147px;top:392px;width:118px;height:22px;border-radius:0 4px 4px 0">Flat</div>
<div class="a" style="left:41px;top:423px">Data Transfer:</div>
<div class="b l" style="left:32px;top:443px;width:116px;height:22px;border-radius:4px 0 0 4px">Data</div>
<div class="b l" style="left:147px;top:443px;width:118px;height:22px;border-radius:0 4px 4px 0">Data Layout</div>
<div class="a" style="left:41px;top:474px">Custom Normal Tools:</div>
<div class="b l" style="left:32px;top:498px;width:233px;height:22px">Flip Custom Normals</div>
<div class="a" style="left:41px;top:530px">Cell Fracture:</div>
<div class="b l" style="left:32px;top:554px;width:233px;height:21px">Cell Fracture</div>
<div class="s" style="left:27px;top:585px;width:242px"></div><i class="tr" style="left:37px;top:594px"></i><div class="a" style="left:52px;top:591px">History</div><i class="gd" style="left:251px;top:598px"></i>
<div class="s" style="left:27px;top:612px;width:242px"></div><i class="tr" style="left:37px;top:621px"></i><div class="a" style="left:52px;top:618px">Landscape Tools</div><i class="gd" style="left:251px;top:625px"></i>
<div class="s" style="left:27px;top:639px;width:242px"></div><i class="tr" style="left:37px;top:648px"></i><div class="a" style="left:52px;top:645px">Auto Mirror</div><i class="gd" style="left:251px;top:652px"></i>
<div class="s" style="left:27px;top:666px;width:242px"></div><i class="tr" style="left:37px;top:675px"></i><div class="a" style="left:52px;top:672px">Snap Utilities</div><i class="gd" style="left:251px;top:679px"></i>
<div class="s" style="left:27px;top:693px;width:242px"></div><i class="tr" style="left:37px;top:702px"></i><div class="a" style="left:52px;top:699px">Tissue Tools</div><i class="gd" style="left:251px;top:706px"></i>
<div class="s" style="left:27px;top:719px;width:242px"></div><i class="td" style="left:37px;top:729px"></i><div class="a" style="left:52px;top:726px">Bool Tools</div><i class="gd" style="left:251px;top:733px"></i>
<div class="a" style="left:42px;top:760px">Bool Tools:</div>
<div class="b" style="left:197px;top:758px;width:68px;height:22px"></div>
<div class="a g" style="left:59px;top:795px">Auto Boolean:</div>
<div class="b g" style="left:32px;top:821px;width:233px;height:23px;border-radius:4px 4px 0 0;color:#585858;border-color:#505050">Difference</div>
<div class="b g r0" style="left:32px;top:843px;width:233px;height:23px;color:#585858;border-color:#505050">Union</div>
<div class="b g" style="left:32px;top:865px;width:233px;height:23px;border-radius:0 0 4px 4px;color:#585858;border-color:#505050">Intersect</div>
<div class="b g" style="left:32px;top:895px;width:233px;height:24px;border-radius:4px 4px 0 0;color:#585858;border-color:#505050">Slice</div>
<div class="b g" style="left:32px;top:918px;width:233px;height:23px;border-radius:0 0 4px 4px;color:#585858;border-color:#505050">Subtract</div>
<div class="a g" style="left:59px;top:950px">Brush Boolean:</div>
<div class="b g" style="left:32px;top:977px;width:233px;height:23px;border-radius:4px 4px 0 0;color:#585858">Difference</div>
<div class="b g r0" style="left:32px;top:999px;width:233px;height:24px;color:#585858">Union</div>
<div class="b g r0" style="left:32px;top:1022px;width:233px;height:24px;color:#585858">Intersect</div>
<div class="b g" style="left:32px;top:1045px;width:233px;height:22px;border-radius:0 0 4px 4px;color:#585858">Slice</div>
<div class="a" style="left:59px;top:1078px">Draw:</div>
<div class="b" style="left:32px;top:1104px;width:233px;height:22px">Draw Poly Brush</div>
<i class="td" style="left:15px;top:1484px"></i><div class="a" style="left:28px;top:1481px">Make Parent</div><i class="gd" style="left:251px;top:1488px"></i>
<div class="a" style="left:18px;top:1516px">Type:</div>
<div class="m" style="left:99px;top:1513px;width:166px;height:22px">Object</div>
<div class="c" style="left:12px;top:1543px"></div><div class="a" style="left:37px;top:1543px">Keep Transform</div>

<!-- ============ N PANEL ============ -->
<div class="p" style="left:3075px;top:60px;width:250px;height:1843px;background:#727272"></div>
<div class="p" style="left:3304px;top:60px;width:15px;height:1838px;background:#5e5e5e;border-radius:7px"></div>
<div class="p" style="left:3304px;top:134px;width:15px;height:1584px;background:#8a8a8a;border-radius:7px"></div>
<div class="p" style="left:3325px;top:60px;width:1px;height:2065px;background:#1c1c1c"></div>

<div class="n" style="left:3084px;top:64px;width:160px;height:22px;border-radius:0"><span>Y:</span><span>0m</span></div>
<div class="n rb" style="left:3084px;top:85px;width:160px;height:23px"><span>Z:</span><span>0m</span></div>
<div class="a" style="left:3093px;top:115px">Rotation:</div>
<div class="n rt" style="left:3084px;top:135px;width:160px;height:24px"><span>X:</span><span>0°</span></div>
<div class="n r0" style="left:3084px;top:158px;width:160px;height:24px"><span>Y:</span><span>0°</span></div>
<div class="n rb" style="left:3084px;top:181px;width:160px;height:22px"><span>Z:</span><span>0°</span></div>
<div class="m" style="left:3084px;top:205px;width:210px;height:23px">XYZ Euler</div>
<div class="a" style="left:3093px;top:234px">Scale:</div>
<div class="n rt" style="left:3084px;top:254px;width:160px;height:24px"><span>X:</span><span>1.000</span></div>
<div class="n r0" style="left:3084px;top:277px;width:160px;height:24px"><span>Y:</span><span>1.000</span></div>
<div class="n rb" style="left:3084px;top:300px;width:160px;height:22px"><span>Z:</span><span>1.000</span></div>
<div class="a" style="left:3093px;top:328px">Dimensions:</div>
<div class="n rt" style="left:3084px;top:348px;width:210px;height:24px"><span>X:</span><span>190.03m</span></div>
<div class="n r0" style="left:3084px;top:371px;width:210px;height:24px"><span>Y:</span><span>190.03m</span></div>
<div class="n rb" style="left:3084px;top:394px;width:210px;height:22px"><span>Z:</span><span>152.06m</span></div>
<div class="b" style="left:3253px;top:64px;width:41px;height:22px;border-radius:0"></div><div class="b" style="left:3253px;top:85px;width:41px;height:23px;border-radius:0 0 4px 4px"></div>
<div class="b" style="left:3253px;top:135px;width:41px;height:24px;border-radius:4px 4px 0 0"></div><div class="b r0" style="left:3253px;top:158px;width:41px;height:24px"></div><div class="b" style="left:3253px;top:181px;width:41px;height:22px;border-radius:0 0 4px 4px"></div>
<div class="b" style="left:3253px;top:254px;width:41px;height:24px;border-radius:4px 4px 0 0"></div><div class="b r0" style="left:3253px;top:277px;width:41px;height:24px"></div><div class="b" style="left:3253px;top:300px;width:41px;height:22px;border-radius:0 0 4px 4px"></div>

<div class="s" style="left:3080px;top:424px;width:218px"></div>
<i class="td" style="left:3089px;top:434px"></i><div class="c on" style="left:3103px;top:431px"></div><div class="a" style="left:3126px;top:431px">Grease Pencil Layers</div><i class="gd" style="left:3280px;top:438px"></i>
<div class="act" style="left:3084px;top:462px;width:105px;height:23px;border-radius:4px 0 0 4px">Scene</div>
<div class="m mc" style="left:3188px;top:462px;width:106px;height:23px;border-radius:0 4px 4px 0">Object</div>
<div class="m" style="left:3084px;top:490px;width:36px;height:22px;border-radius:4px 0 0 4px"></div>
<div class="b" style="left:3119px;top:490px;width:175px;height:22px;border-radius:0 4px 4px 0">New</div>
<div class="b" style="left:3084px;top:518px;width:210px;height:22px">New Layer</div>
<div class="s" style="left:3080px;top:548px;width:218px"></div>
<i class="td" style="left:3089px;top:557px"></i><div class="a" style="left:3103px;top:554px">View</div><i class="gd" style="left:3280px;top:561px"></i>
<div class="n ra" style="left:3084px;top:585px;width:210px;height:22px"><span>Lens:</span><span>35mm</span></div>
<div class="a" style="left:3093px;top:614px">Lock to Object:</div>
<div class="f" style="left:3084px;top:636px;width:210px;height:22px"></div>
<div class="c" style="left:3087px;top:664px"></div><div class="a" style="left:3112px;top:664px">Lock to Cursor</div>
<div class="c" style="left:3087px;top:692px"></div><div class="a" style="left:3112px;top:692px">Lock Camera to View</div>
<div class="a" style="left:3093px;top:720px">Clip:</div>
<div class="n rt" style="left:3084px;top:740px;width:210px;height:23px"><span>Start:</span><span>5cm</span></div>
<div class="n rb" style="left:3084px;top:762px;width:210px;height:22px"><span>End:</span><span>1km</span></div>
<div class="a" style="left:3093px;top:789px;color:#555">Local Camera:</div>
<div class="f d" style="left:3084px;top:809px;width:210px;height:22px;padding-left:28px;opacity:.6">Camera</div>
<div class="c" style="left:3087px;top:840px"></div><div class="a" style="left:3112px;top:840px">Render Border</div>
<div class="s" style="left:3080px;top:867px;width:218px"></div>
<i class="td" style="left:3089px;top:876px"></i><div class="a" style="left:3103px;top:873px">3D Cursor</div><i class="gd" style="left:3280px;top:880px"></i>
<div class="a" style="left:3093px;top:908px">Location:</div>
<div class="n rt" style="left:3084px;top:928px;width:210px;height:24px"><span>X:</span><span>-104.95m</span></div>
<div class="n r0" style="left:3084px;top:951px;width:210px;height:24px"><span>Y:</span><span>-50.834m</span></div>
<div class="n rb" style="left:3084px;top:974px;width:210px;height:22px"><span>Z:</span><span>23.16m</span></div>
<div class="s" style="left:3080px;top:1005px;width:218px"></div>
<i class="td" style="left:3089px;top:1013px"></i><div class="a" style="left:3103px;top:1010px">Item</div><i class="gd" style="left:3280px;top:1017px"></i>
<div class="f" style="left:3117px;top:1041px;width:176px;height:23px;padding-left:9px;border-radius:5px">Council</div>
<div class="s" style="left:3080px;top:1073px;width:218px"></div>
<i class="td" style="left:3089px;top:1082px"></i><div class="a" style="left:3103px;top:1079px">Display</div><i class="gd" style="left:3280px;top:1086px"></i>
<div class="c" style="left:3087px;top:1113px"></div><div class="a" style="left:3112px;top:1113px">Only Render</div>
<div class="c" style="left:3087px;top:1138px"></div><div class="a" style="left:3112px;top:1138px">World Background</div>
<div class="c on" style="left:3087px;top:1166px"></div><div class="a w" style="left:3112px;top:1166px">Outline Selected</div>
<div class="c" style="left:3087px;top:1191px"></div><div class="a" style="left:3112px;top:1191px">All Object Origins</div>
<div class="c on" style="left:3087px;top:1216px"></div><div class="a w" style="left:3112px;top:1216px">Relationship Lines</div>
<div class="c on" style="left:3087px;top:1244px"></div><div class="a w" style="left:3112px;top:1244px">Grid Floor</div>
<div class="b" style="left:3203px;top:1240px;width:30px;height:22px;border-radius:4px 0 0 4px;color:#fff;background:linear-gradient(#7b7b7b,#636363)">X</div>
<div class="b r0" style="left:3232px;top:1240px;width:31px;height:22px;color:#fff;background:linear-gradient(#6a6a6a,#555)">Y</div>
<div class="b" style="left:3262px;top:1240px;width:31px;height:22px;border-radius:0 4px 4px 0">Z</div>
<div class="n rt" style="left:3085px;top:1265px;width:209px;height:24px"><span>Lines:</span><span>16</span></div>
<div class="n r0" style="left:3085px;top:1288px;width:209px;height:24px"><span>Scale:</span><span>1.000</span></div>
<div class="n rb" style="left:3085px;top:1311px;width:209px;height:22px;color:#5e5e5e;background:linear-gradient(#808080,#959595)"><span>Subdivisions:</span><span>10</span></div>
<div class="b" style="left:3085px;top:1350px;width:209px;height:23px">Toggle Quad View</div>
<div class="c on" style="left:3087px;top:1382px"></div><div class="a w" style="left:3112px;top:1382px">Lock</div>
<div class="c" style="left:3087px;top:1407px"></div><div class="a" style="left:3112px;top:1407px">Box</div>
<div class="c" style="left:3087px;top:1432px;background:#626262;border-color:#555"></div><div class="a" style="left:3112px;top:1432px;color:#555">Clip</div>
<div class="s" style="left:3080px;top:1459px;width:218px"></div>
<i class="td" style="left:3089px;top:1468px"></i><div class="a" style="left:3103px;top:1465px">Shading</div><i class="gd" style="left:3280px;top:1472px"></i>
<div class="c" style="left:3087px;top:1500px"></div><div class="a" style="left:3112px;top:1500px">Textured Solid</div>
<div class="c" style="left:3087px;top:1525px"></div><div class="a" style="left:3112px;top:1525px">Matcap</div>
<div class="c" style="left:3087px;top:1550px"></div><div class="a" style="left:3112px;top:1550px">Backface Culling</div>
<div class="c" style="left:3087px;top:1575px;background:#626262;border-color:#555"></div><div class="a" style="left:3112px;top:1575px;color:#555">Depth Of Field</div>
<div class="c on" style="left:3087px;top:1600px"></div><div class="a w" style="left:3112px;top:1600px">Ambient Occlusion</div>
<div class="n rt" style="left:3085px;top:1622px;width:209px;height:24px"><span>Strength:</span><span>1.000</span></div>
<div class="n r0" style="left:3085px;top:1645px;width:209px;height:24px"><span>Distance:</span><span>0.200</span></div>
<div class="n r0" style="left:3085px;top:1668px;width:209px;height:24px"><span>Attenuation:</span><span>1.000</span></div>
<div class="n rb" style="left:3085px;top:1691px;width:209px;height:21px"><span>Samples:</span><span>20</span></div>
<div class="a" style="left:3093px;top:1717px">Color:</div>
<div class="p" style="left:3085px;top:1737px;width:209px;height:21px;background:#000;border-radius:4px"></div>
<div class="s" style="left:3080px;top:1767px;width:218px"></div>
<i class="tr" style="left:3089px;top:1776px"></i><div class="c on" style="left:3103px;top:1773px"></div><div class="a" style="left:3127px;top:1773px">Motion Tracking</div><i class="gd" style="left:3280px;top:1780px"></i>
<div class="s" style="left:3080px;top:1794px;width:218px"></div>
<i class="tr" style="left:3089px;top:1804px"></i><div class="c" style="left:3103px;top:1801px"></div><div class="a" style="left:3127px;top:1801px">Background Images</div><i class="gd" style="left:3280px;top:1808px"></i>
<div class="s" style="left:3080px;top:1821px;width:218px"></div>
<i class="tr" style="left:3089px;top:1831px"></i><div class="a" style="left:3103px;top:1828px">Transform Orientations</div><i class="gd" style="left:3280px;top:1835px"></i>
<div class="s" style="left:3080px;top:1848px;width:218px"></div>
<i class="tr" style="left:3089px;top:1858px"></i><div class="a" style="left:3103px;top:1855px">Properties</div><i class="gd" style="left:3280px;top:1862px"></i>
<div class="s" style="left:3080px;top:1875px;width:218px"></div>
<i class="td" style="left:3089px;top:1885px"></i><div class="a" style="left:3103px;top:1882px">Property Chart</div><i class="gd" style="left:3280px;top:1889px"></i>

<!-- 3D header -->
<div class="p" style="left:0;top:1903px;width:3325px;height:29px;background:#6e6e6e;border-bottom:2px solid #141414"></div>
<div class="m" style="left:11px;top:1907px;width:35px;height:22px"></div>
<div class="a" style="left:58px;top:1910px">View</div><div class="a" style="left:109px;top:1910px">Select</div><div class="a" style="left:171px;top:1910px">Add</div><div class="a" style="left:217px;top:1910px">Object</div>
<div class="m" style="left:272px;top:1907px;width:136px;height:22px;padding-left:26px">Object Mode</div>
<div class="m" style="left:415px;top:1907px;width:34px;height:22px"></div>
<div class="m" style="left:455px;top:1907px;width:36px;height:22px;border-radius:4px 0 0 4px"></div>
<div class="b" style="left:490px;top:1907px;width:23px;height:22px;border-radius:0 4px 4px 0"></div>
<div class="m mc" style="left:518px;top:1907px;width:23px;height:22px;border-radius:4px 0 0 4px"></div>
<div class="act" style="left:540px;top:1907px;width:24px;height:22px;border-radius:0"></div>
<div class="m mc" style="left:563px;top:1907px;width:22px;height:22px;border-radius:0"></div>
<div class="m mc" style="left:584px;top:1907px;width:24px;height:22px;border-radius:0"></div>
<div class="m" style="left:607px;top:1907px;width:85px;height:22px;border-radius:0 4px 4px 0">Global</div>
<div class="b" style="left:698px;top:1907px;width:54px;height:22px;background:repeating-linear-gradient(90deg,#8a8a8a 0 13px,#2c2c2c 13px 14px)"></div>
<div class="p" style="left:698px;top:1918px;width:54px;height:1px;background:#2c2c2c"></div>
<div class="b" style="left:757px;top:1907px;width:54px;height:22px;background:repeating-linear-gradient(90deg,#8a8a8a 0 13px,#2c2c2c 13px 14px)"></div>
<div class="p" style="left:757px;top:1918px;width:54px;height:1px;background:#2c2c2c"></div>
<div class="m mc" style="left:818px;top:1907px;width:21px;height:22px"></div>
<div class="b" style="left:845px;top:1907px;width:23px;height:22px"></div>
<div class="b" style="left:873px;top:1907px;width:22px;height:22px;border-radius:4px 0 0 4px"></div>
<div class="m" style="left:894px;top:1907px;width:38px;height:22px;border-radius:0"></div>
<div class="b" style="left:931px;top:1907px;width:23px;height:22px;border-radius:0 4px 4px 0"></div>
<div class="b" style="left:961px;top:1907px;width:22px;height:22px;border-radius:4px 0 0 4px"></div>
<div class="b" style="left:982px;top:1907px;width:22px;height:22px;border-radius:0 4px 4px 0"></div>

<!-- timeline header -->
<div class="m" style="left:11px;top:2099px;width:35px;height:22px"></div>
<div class="a" style="left:58px;top:2102px">View</div><div class="a" style="left:109px;top:2102px">Marker</div><div class="a" style="left:174px;top:2102px">Frame</div><div class="a" style="left:236px;top:2102px">Playback</div>
<div class="b" style="left:304px;top:2099px;width:22px;height:22px;border-radius:4px 0 0 4px"></div>
<div class="b" style="left:325px;top:2099px;width:25px;height:22px;border-radius:0 4px 4px 0"></div>
<div class="n" style="left:354px;top:2099px;width:137px;height:22px;border-radius:9px 0 0 9px"><span>Start:</span><span>1</span></div>
<div class="n" style="left:490px;top:2099px;width:130px;height:22px;border-radius:0 9px 9px 0"><span>End:</span><span>250</span></div>
<div class="n ra" style="left:628px;top:2099px;width:100px;height:22px"><span></span><span>1</span></div>
<div class="b" style="left:746px;top:2099px;width:24px;height:22px;border-radius:4px 0 0 4px;font-size:9px">|◀◀</div>
<div class="b r0" style="left:769px;top:2099px;width:24px;height:22px;font-size:9px">◀◀</div>
<div class="b r0" style="left:792px;top:2099px;width:24px;height:22px;font-size:13px">◁</div>
<div class="b r0" style="left:815px;top:2099px;width:24px;height:22px;font-size:13px">▷</div>
<div class="b r0" style="left:838px;top:2099px;width:24px;height:22px;font-size:9px">▶▶</div>
<div class="b" style="left:861px;top:2099px;width:23px;height:22px;border-radius:0 4px 4px 0;font-size:9px">▶▶|</div>
<div class="m" style="left:888px;top:2099px;width:139px;height:22px">No Sync</div>
<div class="b" style="left:1043px;top:2099px;width:24px;height:22px"><span style="width:11px;height:11px;border-radius:50%;background:#d94b22;display:block"></span></div>
<div class="m" style="left:1071px;top:2099px;width:36px;height:22px;padding-left:9px"><span style="width:9px;height:9px;background:#f0b040;transform:rotate(45deg);display:block"></span></div>
<div class="f" style="left:1113px;top:2099px;width:159px;height:22px;border-radius:4px 0 0 4px"></div>
<div class="b r0" style="left:1271px;top:2099px;width:23px;height:22px"></div>
<div class="b" style="left:1293px;top:2099px;width:24px;height:22px;border-radius:0 4px 4px 0"></div>
<div class="b l" style="left:1324px;top:2099px;width:106px;height:22px;padding-left:28px">jog/Shuttle</div>

<!-- ============ OUTLINER ============ -->
<div class="p" style="left:3326px;top:60px;width:514px;height:2065px;background:#727272"></div>
<div class="p" style="left:3326px;top:60px;width:514px;height:30px;background:#6e6e6e"></div>
<div class="p" style="left:3326px;top:90px;width:514px;height:350px;background:repeating-linear-gradient(#727272 0 23px,#6c6c6c 23px 46px)"></div>
<div class="p" style="left:3326px;top:90px;width:445px;height:23px;background:#767a7e"></div>
<div class="p" style="left:3771px;top:90px;width:1px;height:350px;background:#636363"></div>
<div class="p" style="left:3795px;top:90px;width:1px;height:350px;background:#636363"></div>
<div class="p" style="left:3817px;top:90px;width:1px;height:350px;background:#636363"></div>
<div class="m" style="left:3335px;top:63px;width:36px;height:22px"></div>
<div class="a" style="left:3383px;top:67px">View</div><div class="a" style="left:3436px;top:67px">Search</div>
<div class="m" style="left:3492px;top:63px;width:145px;height:22px">All Scenes</div>
<div class="f" style="left:3642px;top:63px;width:135px;height:22px;border-radius:5px"></div>
<div class="a" style="left:3374px;top:94px">Scene</div>
<div class="a" style="left:3397px;top:118px">RenderLayers</div>
<div class="a" style="left:3397px;top:141px">SceneSkies</div>
<div class="a" style="left:3397px;top:164px">Camera</div>
<div class="a w" style="left:3397px;top:187px">Council</div>
<div class="a" style="left:3397px;top:209px">Lamp</div>
<div class="a" style="left:3397px;top:232px">Office</div>
<div class="a" style="left:3397px;top:255px">Roof_conduit.002</div>
<div class="a" style="left:3397px;top:278px">SkyTower</div>
<div class="a" style="left:3397px;top:301px">condominium</div>

<!-- ============ PROPERTIES ============ -->
<div class="p" style="left:3326px;top:440px;width:514px;height:1px;background:#1c1c1c"></div>
<div class="p" style="left:3326px;top:441px;width:514px;height:30px;background:#6e6e6e"></div>
<div class="m" style="left:3335px;top:444px;width:36px;height:22px"></div>
<div class="m mc" style="left:3380px;top:444px;width:275px;height:22px;padding:0"></div>
<div class="act" style="left:3518px;top:444px;width:23px;height:22px;border-radius:0"></div>
<div class="a" style="left:3430px;top:484px">Council</div>
<div class="b" style="left:3335px;top:522px;width:248px;height:23px;border-radius:4px 0 0 0">Apply All</div>
<div class="b" style="left:3582px;top:522px;width:248px;height:23px;border-radius:0 4px 0 0">Delete All</div>
<div class="b" style="left:3335px;top:544px;width:248px;height:23px;border-radius:0 0 0 4px">Viewport Vis</div>
<div class="b" style="left:3582px;top:544px;width:248px;height:23px;border-radius:0 0 4px 0">Toggle Stack</div>
<div class="m" style="left:3335px;top:573px;width:495px;height:22px">Add Modifier</div>
<div class="p" style="left:3334px;top:601px;width:497px;height:305px;box-sizing:border-box;border:1px solid #555;border-radius:4px;background:#727272"></div>
<div class="p" style="left:3335px;top:632px;width:495px;height:1px;background:#444"></div>
<div class="f" style="left:3403px;top:606px;width:230px;height:21px;padding-left:9px;border-radius:5px">Bevel</div>
<div class="m mc" style="left:3643px;top:606px;width:87px;height:21px"></div>
<div class="b" style="left:3739px;top:606px;width:28px;height:21px;border-radius:4px 0 0 4px"></div>
<div class="b" style="left:3766px;top:606px;width:28px;height:21px;border-radius:0 4px 4px 0"></div>
<div class="b" style="left:3339px;top:638px;width:238px;height:23px">Apply</div>
<div class="b" style="left:3587px;top:638px;width:239px;height:23px">Copy</div>
<div class="n ra" style="left:3339px;top:671px;width:238px;height:21px"><span>Width:</span><span>10cm</span></div>
<div class="n ra" style="left:3339px;top:696px;width:238px;height:21px"><span>Segments:</span><span>2</span></div>
<div class="n ra" style="left:3339px;top:721px;width:238px;height:21px;background:linear-gradient(90deg,#6d6d6d 0 43%,transparent 43%),linear-gradient(#8e8e8e,#b4b4b4)"><span>Profile:</span><span>0.50</span></div>
<div class="n ra" style="left:3339px;top:746px;width:238px;height:21px"><span>Material:</span><span>-1</span></div>
<div class="c" style="left:3590px;top:673px"></div><div class="a" style="left:3615px;top:674px">Only Vertices</div>
<div class="c on" style="left:3590px;top:698px"></div><div class="a w" style="left:3615px;top:699px">Clamp Overlap</div>
<div class="c on" style="left:3590px;top:723px"></div><div class="a w" style="left:3615px;top:724px">Loop Slide</div>
<div class="a" style="left:3348px;top:774px">Limit Method:</div>
<div class="m mc" style="left:3339px;top:796px;width:121px;height:22px;border-radius:4px 0 0 4px">None</div>
<div class="act" style="left:3459px;top:796px;width:124px;height:22px;border-radius:0">Angle</div>
<div class="m mc" style="left:3582px;top:796px;width:122px;height:22px;border-radius:0">Weight</div>
<div class="m mc" style="left:3703px;top:796px;width:123px;height:22px;border-radius:0 4px 4px 0">Vertex Group</div>
<div class="n ra" style="left:3339px;top:821px;width:487px;height:21px"><span>Angle:</span><span>30°</span></div>
<div class="a" style="left:3348px;top:849px">Width Method:</div>
<div class="m mc" style="left:3339px;top:871px;width:121px;height:22px;border-radius:4px 0 0 4px">Offset</div>
<div class="act" style="left:3459px;top:871px;width:124px;height:22px;border-radius:0">Width</div>
<div class="m mc" style="left:3582px;top:871px;width:122px;height:22px;border-radius:0">Depth</div>
<div class="m mc" style="left:3703px;top:871px;width:123px;height:22px;border-radius:0 4px 4px 0">Percent</div>

<!-- taskbar strip -->
<div class="p" style="left:0;top:2125px;width:3840px;height:10px;background:#4e4433"></div>
<div class="p" style="left:52px;top:2125px;width:48px;height:10px;background:#6e655a"></div>
<div class="p" style="left:105px;top:2125px;width:48px;height:10px;background:#6e655a"></div>
<div class="p" style="left:424px;top:2125px;width:47px;height:10px;border:1px solid #a04030;box-sizing:border-box"></div>
<div class="p" style="left:528px;top:2125px;width:49px;height:10px;background:#968e84"></div>
<div class="p" style="left:900px;top:2125px;width:48px;height:10px;background:#6e655a"></div>

<!-- ============ ICON OVERLAY ============ -->
<svg class="p" style="left:0;top:0;pointer-events:none" width="3840" height="2135" viewBox="0 0 3840 2135">
<defs>
<symbol id="tri" viewBox="0 0 18 18"><path d="M2.5 3.5H15.5L9 15.5Z" fill="#6f6355" stroke="#d39a55" stroke-width="1.6"/></symbol>
<symbol id="vtx" viewBox="0 0 18 18"><path d="M3 4H15L9 15Z" fill="none" stroke="#c8c8c8" stroke-width="1.2"/><rect x="1.5" y="2.5" width="3" height="3" fill="#222"/><rect x="13.5" y="2.5" width="3" height="3" fill="#222"/><rect x="7.5" y="13" width="3" height="3" fill="#222"/></symbol>
<symbol id="wr" viewBox="0 0 18 18"><path d="M2 16L9 8.500C7.500 4.500 10.500 1 15 1.500L11.800 4.800L13 7L15.500 7.500L17 4C17.800 8.500 14 12 10 10.500L4 17Z" fill="#e6eef9" stroke="#1f3f70" stroke-width="1"/></symbol>
<symbol id="dt" viewBox="0 0 18 18"><path d="M3 3h3v3H3zM8 3h3v3H8zM13 3h3v3h-3zM3 8h3v3H3zM8 8h3v3H8zM13 8h3v3h-3zM3 13h3v3H3zM8 13h3v3H8zM13 13h3v3h-3z" fill="#eee" stroke="#222" stroke-width=".7"/></symbol>
<symbol id="eye" viewBox="0 0 18 18"><path d="M1 9Q9 2 17 9Q9 14 1 9Z" fill="#fff" stroke="#222"/><circle cx="9" cy="8.500" r="3" fill="#222"/></symbol>
<symbol id="ptr" viewBox="0 0 18 18"><path d="M5 2L14 11H10L12 16L9.500 17L7.500 12L5 14Z" fill="#fff" stroke="#111"/></symbol>
<symbol id="cm" viewBox="0 0 18 18"><rect x="1.500" y="4.500" width="15" height="11" rx="1" fill="#bbb" stroke="#222"/><rect x="4" y="2.500" width="5" height="3" fill="#999" stroke="#222" stroke-width=".8"/><circle cx="10" cy="10" r="3.500" fill="#444" stroke="#eee"/></symbol>
<symbol id="lk" viewBox="0 0 18 18"><rect x="4" y="9" width="10" height="7" fill="#c9c9c9" stroke="#222"/><path d="M6 9V5Q6 2 9 2Q12 2 12 5" fill="none" stroke="#eee" stroke-width="1.600" transform="translate(-1 0)"/></symbol>
<symbol id="cu" viewBox="0 0 18 18"><path d="M9 1.500L16 5V13L9 16.500L2 13V5Z" fill="#d9904a" stroke="#5d3d1a"/><path d="M2.500 5L9 8L15.500 5L9 2Z" fill="#f6d19a"/><path d="M9 8V16" stroke="#8e5c28"/></symbol>
<symbol id="sc" viewBox="0 0 18 18"><circle cx="13" cy="5" r="3.500" fill="#7fa4d8" stroke="#222"/><circle cx="6" cy="12" r="4" fill="#ddd" stroke="#222"/><rect x="3" y="2" width="4" height="4" fill="#bcb26a" stroke="#222" stroke-width=".7"/></symbol>
<symbol id="pl2" viewBox="0 0 14 14"><circle cx="7" cy="7" r="5" fill="#7a7a7a" stroke="#111"/><path d="M4 7H10M7 4V10" stroke="#fff" stroke-width="1.400"/></symbol>
<symbol id="rl" viewBox="0 0 18 18"><rect x="6" y="5" width="10" height="11" fill="#b7b7b7" stroke="#222"/><rect x="2" y="2" width="11" height="11" fill="#dde6f2" stroke="#222"/><circle cx="7.500" cy="7" r="2.400" fill="#4b79bd"/></symbol>
<symbol id="bl" viewBox="0 0 18 18"><path d="M2 10L6 7L3 5H9Q15 5 16 10Q16 15 10 16Q4 16 4 11Z" fill="#e68a2c" stroke="#5a3510"/><circle cx="10" cy="10.500" r="3" fill="#fff"/><circle cx="10" cy="10.500" r="1.600" fill="#2a5b96"/></symbol>
</defs>
<!-- window controls -->
<path d="M3722 16.500H3735" stroke="#222" stroke-width="2"/>
<rect x="3755.500" y="7.500" width="13" height="11" fill="none" stroke="#222" stroke-width="1.400"/><path d="M3755 9H3769" stroke="#222" stroke-width="2"/>
<path d="M3802 7L3812 16M3812 7L3802 16" stroke="#fff" stroke-width="2.400"/>
<!-- top header icons -->
<use href="#bl" x="4" y="5" width="20" height="20"/>
<circle cx="23" cy="44" r="7.500" fill="#4c7dc0" stroke="#ddd"/><text x="23" y="49" font-family="Liberation Serif" font-size="13" font-weight="bold" fill="#fff" text-anchor="middle">i</text>
<rect x="288" y="37" width="15" height="14" fill="#ddd" stroke="#111"/><path d="M295 37V44H288" stroke="#111" fill="none"/>
<use href="#sc" x="515" y="35" width="18" height="18"/>
<use href="#bl" x="901" y="35" width="18" height="18"/>
<!-- tool shelf icons -->
<circle cx="231" cy="768" r="8" fill="#4c74ad" stroke="#1f3658" stroke-width="2"/><text x="231" y="773" font-family="Liberation Sans" font-size="13" font-weight="bold" fill="#fff" text-anchor="middle">?</text>
<use href="#wr" x="36" y="794" width="18" height="18" opacity=".7"/><use href="#wr" x="36" y="949" width="18" height="18" opacity=".7"/>
<g fill="#9a9a9a" stroke="#666" stroke-width="1" opacity=".8"><circle cx="43" cy="832" r="5"/><circle cx="49" cy="835" r="5"/><circle cx="43" cy="853" r="5"/><circle cx="49" cy="856" r="5"/><circle cx="43" cy="876" r="5"/><circle cx="49" cy="879" r="5"/><circle cx="43" cy="906" r="5"/><circle cx="49" cy="909" r="5"/><circle cx="43" cy="929" r="5"/><circle cx="49" cy="932" r="5"/><circle cx="43" cy="988" r="5"/><circle cx="49" cy="991" r="5"/><circle cx="43" cy="1010" r="5"/><circle cx="49" cy="1013" r="5"/><circle cx="43" cy="1033" r="5"/><circle cx="49" cy="1036" r="5"/><circle cx="43" cy="1055" r="5"/><circle cx="49" cy="1058" r="5"/></g>
<path d="M36 1081L44 1078L52 1081V1091L44 1094L36 1091Z" fill="#ddd" stroke="#222"/><path d="M38 1114L50 1107L56 1104L54 1110L43 1117L38 1120Z" fill="#5d89c4" stroke="#222"/>
<!-- 3D header icons -->
<path d="M22 1911H36V1922L29 1926L22 1922Z" fill="#ddd" stroke="#222"/>
<use href="#cu" x="277" y="1909" width="16" height="18"/>
<circle cx="427" cy="1918" r="7" fill="#eee" stroke="#222"/>
<use href="#sc" x="461" y="1909" width="16" height="18"/>
<path d="M529 1911L529 1918L522 1925M529 1918L537 1925" stroke="#ddd" stroke-width="2" fill="none"/><path d="M547 1925L558 1911" stroke="#1d4d9c" stroke-width="2.500"/><path d="M570 1925Q572 1913 580 1911" stroke="#5d8ac0" stroke-width="2.500" fill="none"/><path d="M592 1925V1913H601" stroke="#5d8ac0" stroke-width="2.500" fill="none"/>
<use href="#cm" x="964" y="1910" width="16" height="16"/>
<!-- timeline icons -->
<circle cx="29" cy="2110" r="7" fill="#ddd" stroke="#222"/><path d="M29 2110V2105M29 2110H33" stroke="#222"/>
<circle cx="315" cy="2110" r="8" fill="#d9a05a" stroke="#222"/><path d="M315 2110V2104M315 2110L320 2112" stroke="#fff" stroke-width="1.500"/>
<use href="#lk" x="330" y="2102" width="16" height="16"/>
<!-- N panel -->
<g><use href="#lk" x="3264" y="66" width="18" height="18"/><use href="#lk" x="3264" y="88" width="18" height="18"/><use href="#lk" x="3264" y="138" width="18" height="18"/><use href="#lk" x="3264" y="161" width="18" height="18"/><use href="#lk" x="3264" y="183" width="18" height="18"/><use href="#lk" x="3264" y="257" width="18" height="18"/><use href="#lk" x="3264" y="280" width="18" height="18"/><use href="#lk" x="3264" y="302" width="18" height="18"/></g>
<path d="M3090 508L3102 494L3106 497L3094 510Z" fill="#c4c26a" stroke="#222"/>
<path d="M3128 501H3140M3134 495V507" stroke="#eee" stroke-width="2.500"/>
<use href="#cu" x="3089" y="638" width="18" height="18"/>
<path d="M3276 655L3288 642L3290 644L3279 656Z" fill="#eee" stroke="#222"/>
<use href="#cu" x="3089" y="810" width="18" height="18" opacity=".6"/>
<use href="#cu" x="3089" y="1042" width="20" height="20"/>
<!-- outliner header -->
<rect x="3341" y="67" width="8" height="14" fill="#d9a05a" stroke="#222"/><path d="M3350 71H3358M3350 77H3358" stroke="#ddd" stroke-width="2"/>
<circle cx="3660" cy="72" r="5" fill="none" stroke="#222" stroke-width="1.500"/><path d="M3656 76L3649 83" stroke="#6d4c22" stroke-width="3"/>
<!-- outliner rows -->
<use href="#pl2" x="3330" y="95" width="14" height="14"/><use href="#sc" x="3351" y="93" width="18" height="18"/>
<use href="#pl2" x="3353" y="119" width="14" height="14"/><use href="#rl" x="3374" y="117" width="18" height="18"/><path d="M3494.500 118V134" stroke="#333" stroke-width="2"/><use href="#rl" x="3509" y="117" width="18" height="18"/>
<circle cx="3383" cy="149" r="8" fill="#6f9fbf" stroke="#222"/><path d="M3376 148Q3383 142 3390 148Q3383 156 3376 148" fill="#d5e0e8"/>
<g id="rowsExp"><use href="#pl2" x="3353" y="165" width="14" height="14"/><use href="#pl2" x="3353" y="188" width="14" height="14"/><use href="#pl2" x="3353" y="210" width="14" height="14"/><use href="#pl2" x="3353" y="233" width="14" height="14"/><use href="#pl2" x="3353" y="256" width="14" height="14"/><use href="#pl2" x="3353" y="279" width="14" height="14"/><use href="#pl2" x="3353" y="302" width="14" height="14"/></g>
<rect x="3375" y="165" width="16" height="13" rx="3" fill="#d9893a" stroke="#222"/><circle cx="3380" cy="166" r="3" fill="#e6a95c" stroke="#222"/><circle cx="3388" cy="166" r="3" fill="#e6a95c" stroke="#222"/>
<circle cx="3383" cy="195" r="9.500" fill="#a8722f" opacity=".6"/><use href="#tri" x="3374" y="186" width="18" height="18"/>
<circle cx="3383" cy="213" r="6" fill="#e8b24a" stroke="#222"/><rect x="3379" y="219" width="8" height="6" fill="#999" stroke="#222"/>
<use href="#tri" x="3374" y="231" width="18" height="18"/><use href="#tri" x="3374" y="254" width="18" height="18"/><use href="#tri" x="3374" y="277" width="18" height="18"/><use href="#tri" x="3374" y="300" width="18" height="18"/>
<path d="M3456.500 164V180M3453.500 187V203M3443.500 209V225M3445.500 232V248M3516.500 255V271M3466.500 278V294M3492.500 301V317" stroke="#333" stroke-width="2"/>
<circle cx="3479" cy="172" r="8" fill="#8a8a8a" stroke="#b5b5b5" stroke-width="2"/>
<!-- Council row -->
<use href="#wr" x="3468" y="186" width="18" height="18"/><use href="#dt" x="3490" y="186" width="18" height="18"/><use href="#vtx" x="3514" y="186" width="18" height="18"/>
<use href="#tri" x="3537" y="186" width="18" height="18"/><use href="#tri" x="3560" y="186" width="18" height="18"/><use href="#tri" x="3583" y="186" width="18" height="18"/><use href="#tri" x="3606" y="186" width="18" height="18"/><use href="#tri" x="3629" y="186" width="18" height="18"/>
<!-- Lamp -->
<rect x="3456" y="208" width="18" height="18" fill="#7c7c6c"/><circle cx="3465" cy="217" r="5" fill="#c6b77c" opacity=".7"/>
<!-- Office -->
<use href="#wr" x="3459" y="231" width="18" height="18"/><use href="#vtx" x="3481" y="231" width="18" height="18"/>
<use href="#tri" x="3505" y="231" width="18" height="18"/><use href="#tri" x="3528" y="231" width="18" height="18"/><use href="#tri" x="3551" y="231" width="18" height="18"/><use href="#tri" x="3574" y="231" width="18" height="18"/><use href="#tri" x="3597" y="231" width="18" height="18"/><use href="#tri" x="3620" y="231" width="18" height="18"/><use href="#tri" x="3643" y="231" width="18" height="18"/><use href="#tri" x="3666" y="231" width="18" height="18"/><use href="#tri" x="3689" y="231" width="18" height="18"/><use href="#tri" x="3712" y="231" width="18" height="18"/>
<!-- Roof -->
<use href="#vtx" x="3529" y="254" width="18" height="18"/><use href="#wr" x="3553" y="254" width="18" height="18"/><use href="#dt" x="3575" y="254" width="18" height="18"/>
<!-- SkyTower -->
<use href="#wr" x="3481" y="277" width="18" height="18"/><use href="#dt" x="3503" y="277" width="18" height="18"/><use href="#vtx" x="3527" y="277" width="18" height="18"/><use href="#tri" x="3550" y="277" width="18" height="18"/><use href="#tri" x="3573" y="277" width="18" height="18"/><use href="#tri" x="3596" y="277" width="18" height="18"/>
<!-- condominium -->
<use href="#wr" x="3506" y="300" width="18" height="18"/><use href="#dt" x="3529" y="300" width="18" height="18"/><use href="#vtx" x="3551" y="300" width="18" height="18"/>
<use href="#tri" x="3574" y="300" width="18" height="18"/><use href="#tri" x="3597" y="300" width="18" height="18"/><use href="#tri" x="3620" y="300" width="18" height="18"/><use href="#tri" x="3643" y="300" width="18" height="18"/><use href="#tri" x="3666" y="300" width="18" height="18"/><use href="#tri" x="3689" y="300" width="18" height="18"/><use href="#tri" x="3712" y="300" width="18" height="18"/><use href="#tri" x="3735" y="300" width="18" height="18"/>
<!-- restrict columns -->
<g>
<use href="#eye" x="3774" y="163" width="18" height="18"/><use href="#ptr" x="3798" y="163" width="18" height="18"/><use href="#cm" x="3820" y="163" width="18" height="18"/>
<use href="#eye" x="3774" y="186" width="18" height="18"/><use href="#ptr" x="3798" y="186" width="18" height="18"/><use href="#cm" x="3820" y="186" width="18" height="18"/>
<g opacity=".3"><use href="#eye" x="3774" y="208" width="18" height="18"/><use href="#ptr" x="3798" y="208" width="18" height="18"/><use href="#cm" x="3820" y="208" width="18" height="18"/></g>
<use href="#eye" x="3774" y="231" width="18" height="18"/><use href="#ptr" x="3798" y="231" width="18" height="18"/><use href="#cm" x="3820" y="231" width="18" height="18"/>
<use href="#eye" x="3774" y="254" width="18" height="18"/><use href="#ptr" x="3798" y="254" width="18" height="18"/><use href="#cm" x="3820" y="254" width="18" height="18"/>
<use href="#eye" x="3774" y="277" width="18" height="18"/><use href="#ptr" x="3798" y="277" width="18" height="18"/><use href="#cm" x="3820" y="277" width="18" height="18"/>
<use href="#eye" x="3774" y="300" width="18" height="18"/><use href="#ptr" x="3798" y="300" width="18" height="18"/><use href="#cm" x="3820" y="300" width="18" height="18"/>
</g>
<!-- properties tabs -->
<rect x="3341" y="448" width="16" height="5" rx="2" fill="#ddd" stroke="#111"/><rect x="3341" y="457" width="16" height="5" rx="2" fill="#ddd" stroke="#111"/>
<path d="M3403 444V466M3426 444V466M3449 444V466M3472 444V466M3495 444V466M3518 444V466M3541 444V466M3564 444V466M3587 444V466M3610 444V466M3633 444V466" stroke="#222"/>
<use href="#cm" x="3383" y="447" width="17" height="17"/><use href="#rl" x="3406" y="447" width="17" height="17"/><use href="#sc" x="3429" y="447" width="17" height="17"/>
<circle cx="3460" cy="455" r="8" fill="#6f97af" stroke="#222"/><use href="#cu" x="3475" y="446" width="18" height="18"/>
<path d="M3500 460L3506 454M3504 460L3512 451" stroke="#ddd" stroke-width="3" fill="none"/><use href="#wr" x="3520" y="446" width="19" height="19"/>
<use href="#vtx" x="3543" y="446" width="19" height="19"/><circle cx="3575" cy="455" r="8" fill="#8a7a72" stroke="#222"/><path d="M3567 455A8 8 0 0 1 3583 455Z" fill="#cfc3bc"/>
<rect x="3591" y="447" width="16" height="16" fill="#e8c8c8"/><path d="M3591 447h4v4h-4zM3599 447h4v4h-4zM3595 451h4v4h-4zM3603 451h4v4h-4zM3591 455h4v4h-4zM3599 455h4v4h-4zM3595 459h4v4h-4zM3603 459h4v4h-4z" fill="#c04a4a"/>
<path d="M3616 450H3630M3616 458H3630M3620 446V464M3627 446V464" stroke="#ddd39a" stroke-width="1.500" fill="none"/>
<path d="M3638 455L3644 463L3651 452" stroke="#8aa6d0" stroke-width="3" fill="none"/><circle cx="3649" cy="449" r="3.500" fill="#ddd"/>
<!-- breadcrumb -->
<path d="M3338 497L3344 491L3340 488L3346 483L3354 491L3349 496L3346 493L3339 500Z" fill="#ddd" stroke="#222"/>
<use href="#sc" x="3360" y="483" width="18" height="18"/><path d="M3385 489L3389 492L3385 495Z" fill="#333"/>
<use href="#cu" x="3407" y="483" width="19" height="19"/>
<!-- apply/delete icons -->
<use href="#cu" x="3343" y="524" width="18" height="18"/><path d="M3341 533H3353M3345 529L3341 533L3345 537" stroke="#fff" stroke-width="2" fill="none"/>
<path d="M3590 527L3600 540M3600 527L3590 540" stroke="#fff" stroke-width="3"/>
<use href="#eye" x="3339" y="546" width="20" height="18"/>
<path d="M3589 562L3602 549M3589 556V562H3595M3596 549H3603V555" stroke="#fff" stroke-width="1.600" fill="none"/>
<!-- modifier header -->
<path d="M3346 612H3358L3352 620Z" fill="none" stroke="#fff" stroke-width="1.500"/>
<path d="M3377 623L3389 610V623Z" fill="#7aaee8" stroke="#1f4d88"/>
<use href="#cm" x="3649" y="607" width="18" height="18"/><use href="#eye" x="3677" y="607" width="18" height="18"/><use href="#cu" x="3706" y="607" width="18" height="18"/>
<path d="M3747 620H3760L3753.500 613Z" fill="none" stroke="#fff" stroke-width="1.500"/><path d="M3774 613H3787L3780.500 620Z" fill="none" stroke="#fff" stroke-width="1.500"/>
<path d="M3810 611L3820 621M3820 611L3810 621" stroke="#fff" stroke-width="3"/>
</svg>
</body></html>
